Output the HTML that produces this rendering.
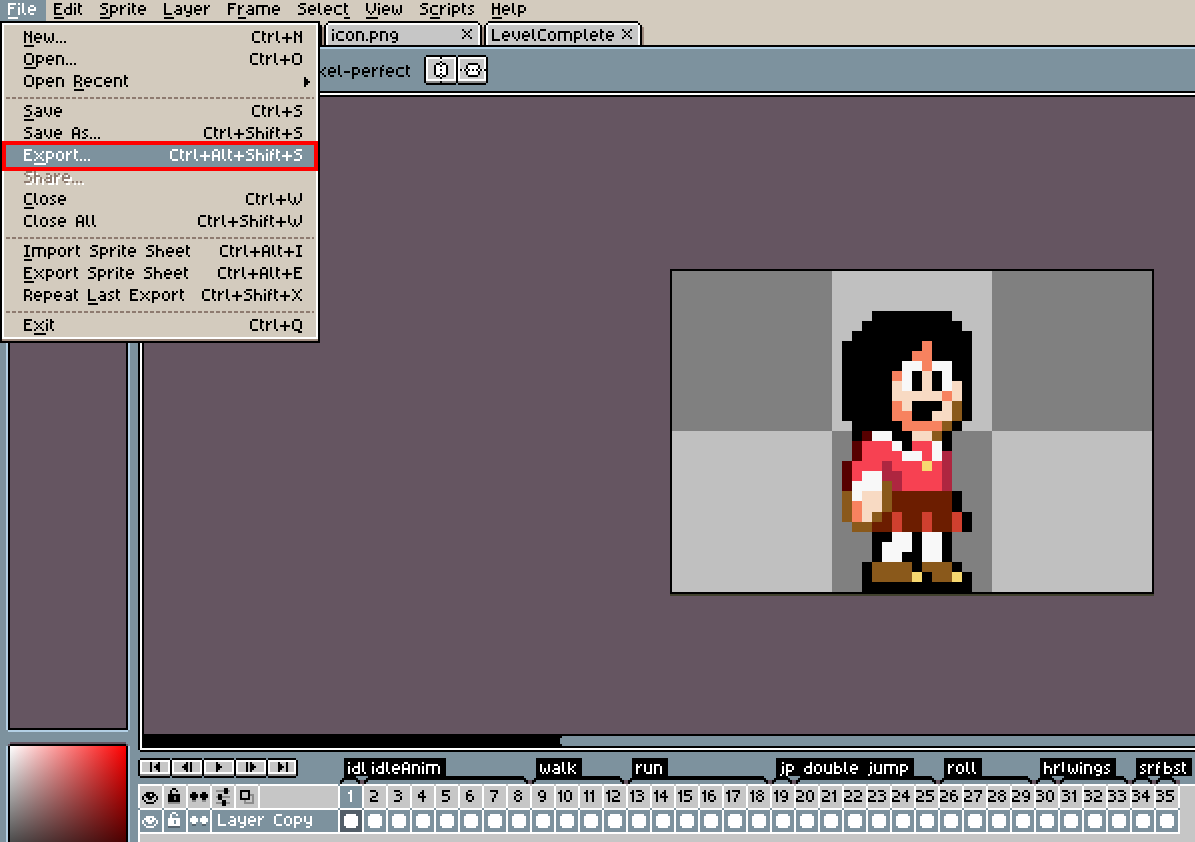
<!DOCTYPE html>
<html><head><meta charset="utf-8"><title>Aseprite - File menu</title>
<style>
html,body{margin:0;padding:0}
body{width:1195px;height:842px;overflow:hidden;position:relative;background:#7d929e;font-family:"Liberation Sans",sans-serif}
div,span,svg{position:absolute}
.t{white-space:pre;font-family:"Liberation Sans",sans-serif}
</style></head><body>
<div style="left:0px;top:0px;width:1195px;height:45px;background:#d3cbbe;"></div>
<div style="left:0px;top:45px;width:1195px;height:2px;background:#000;"></div>
<div style="left:0px;top:47px;width:1195px;height:2px;background:#b3d0e5;"></div>
<div style="left:0px;top:0px;width:46px;height:21px;background:#7d929e;"></div>
<svg style="position:absolute;left:8px;top:3px" width="30" height="16" viewBox="0 0 15 8" shape-rendering="crispEdges"><title>File</title><path fill="#fff" d="M0 0h4v1h-4zM0 1h1v1h-1zM0 2h3v1h-3zM0 3h1v1h-1zM0 4h1v1h-1zM0 5h1v1h-1zM5 0h1v1h-1zM5 2h1v1h-1zM5 3h1v1h-1zM5 4h1v1h-1zM5 5h1v1h-1zM7 0h1v1h-1zM7 1h1v1h-1zM7 2h1v1h-1zM7 3h1v1h-1zM7 4h1v1h-1zM8 5h1v1h-1zM11 1h2v1h-2zM10 2h1v1h-1zM13 2h1v1h-1zM10 3h4v1h-4zM10 4h1v1h-1zM11 5h2v1h-2zM0 7h5v1h-5z"/></svg>
<svg style="position:absolute;left:54px;top:3px" width="30" height="16" viewBox="0 0 15 8" shape-rendering="crispEdges"><title>Edit</title><path fill="#000" d="M0 0h4v1h-4zM0 1h1v1h-1zM0 2h3v1h-3zM0 3h1v1h-1zM0 4h1v1h-1zM0 5h4v1h-4zM8 0h1v1h-1zM8 1h1v1h-1zM6 2h3v1h-3zM5 3h1v1h-1zM8 3h1v1h-1zM5 4h1v1h-1zM8 4h1v1h-1zM6 5h3v1h-3zM10 0h1v1h-1zM10 2h1v1h-1zM10 3h1v1h-1zM10 4h1v1h-1zM10 5h1v1h-1zM12 0h1v1h-1zM12 1h2v1h-2zM12 2h1v1h-1zM12 3h1v1h-1zM12 4h1v1h-1zM13 5h1v1h-1zM0 7h5v1h-5z"/></svg>
<svg style="position:absolute;left:100px;top:3px" width="48" height="16" viewBox="0 0 24 8" shape-rendering="crispEdges"><title>Sprite</title><path fill="#000" d="M1 0h3v1h-3zM0 1h1v1h-1zM1 2h2v1h-2zM3 3h1v1h-1zM3 4h1v1h-1zM0 5h3v1h-3zM5 1h3v1h-3zM5 2h1v1h-1zM8 2h1v1h-1zM5 3h1v1h-1zM8 3h1v1h-1zM5 4h3v1h-3zM5 5h1v1h-1zM5 6h1v1h-1zM10 1h1v1h-1zM12 1h1v1h-1zM10 2h2v1h-2zM10 3h1v1h-1zM10 4h1v1h-1zM10 5h1v1h-1zM14 0h1v1h-1zM14 2h1v1h-1zM14 3h1v1h-1zM14 4h1v1h-1zM14 5h1v1h-1zM16 0h1v1h-1zM16 1h2v1h-2zM16 2h1v1h-1zM16 3h1v1h-1zM16 4h1v1h-1zM17 5h1v1h-1zM20 1h2v1h-2zM19 2h1v1h-1zM22 2h1v1h-1zM19 3h4v1h-4zM19 4h1v1h-1zM20 5h2v1h-2zM0 7h5v1h-5z"/></svg>
<svg style="position:absolute;left:164px;top:3px" width="48" height="16" viewBox="0 0 24 8" shape-rendering="crispEdges"><title>Layer</title><path fill="#000" d="M0 0h1v1h-1zM0 1h1v1h-1zM0 2h1v1h-1zM0 3h1v1h-1zM0 4h1v1h-1zM0 5h4v1h-4zM6 1h2v1h-2zM8 2h1v1h-1zM6 3h3v1h-3zM5 4h1v1h-1zM8 4h1v1h-1zM6 5h3v1h-3zM10 1h1v1h-1zM13 1h1v1h-1zM10 2h1v1h-1zM13 2h1v1h-1zM10 3h1v1h-1zM13 3h1v1h-1zM11 4h3v1h-3zM13 5h1v1h-1zM11 6h2v1h-2zM16 1h2v1h-2zM15 2h1v1h-1zM18 2h1v1h-1zM15 3h4v1h-4zM15 4h1v1h-1zM16 5h2v1h-2zM20 1h1v1h-1zM22 1h1v1h-1zM20 2h2v1h-2zM20 3h1v1h-1zM20 4h1v1h-1zM20 5h1v1h-1zM0 7h5v1h-5z"/></svg>
<svg style="position:absolute;left:228px;top:3px" width="54" height="16" viewBox="0 0 27 8" shape-rendering="crispEdges"><title>Frame</title><path fill="#000" d="M0 0h4v1h-4zM0 1h1v1h-1zM0 2h3v1h-3zM0 3h1v1h-1zM0 4h1v1h-1zM0 5h1v1h-1zM5 1h1v1h-1zM7 1h1v1h-1zM5 2h2v1h-2zM5 3h1v1h-1zM5 4h1v1h-1zM5 5h1v1h-1zM10 1h2v1h-2zM12 2h1v1h-1zM10 3h3v1h-3zM9 4h1v1h-1zM12 4h1v1h-1zM10 5h3v1h-3zM14 1h6v1h-6zM14 2h1v1h-1zM17 2h1v1h-1zM20 2h1v1h-1zM14 3h1v1h-1zM17 3h1v1h-1zM20 3h1v1h-1zM14 4h1v1h-1zM17 4h1v1h-1zM20 4h1v1h-1zM14 5h1v1h-1zM17 5h1v1h-1zM20 5h1v1h-1zM23 1h2v1h-2zM22 2h1v1h-1zM25 2h1v1h-1zM22 3h4v1h-4zM22 4h1v1h-1zM23 5h2v1h-2zM5 7h4v1h-4z"/></svg>
<svg style="position:absolute;left:298px;top:3px" width="52" height="16" viewBox="0 0 26 8" shape-rendering="crispEdges"><title>Select</title><path fill="#000" d="M1 0h3v1h-3zM0 1h1v1h-1zM1 2h2v1h-2zM3 3h1v1h-1zM3 4h1v1h-1zM0 5h3v1h-3zM6 1h2v1h-2zM5 2h1v1h-1zM8 2h1v1h-1zM5 3h4v1h-4zM5 4h1v1h-1zM6 5h2v1h-2zM10 0h1v1h-1zM10 1h1v1h-1zM10 2h1v1h-1zM10 3h1v1h-1zM10 4h1v1h-1zM11 5h1v1h-1zM14 1h2v1h-2zM13 2h1v1h-1zM16 2h1v1h-1zM13 3h4v1h-4zM13 4h1v1h-1zM14 5h2v1h-2zM19 1h3v1h-3zM18 2h1v1h-1zM18 3h1v1h-1zM18 4h1v1h-1zM19 5h3v1h-3zM23 0h1v1h-1zM23 1h2v1h-2zM23 2h1v1h-1zM23 3h1v1h-1zM23 4h1v1h-1zM24 5h1v1h-1zM23 7h3v1h-3z"/></svg>
<svg style="position:absolute;left:366px;top:3px" width="38" height="16" viewBox="0 0 19 8" shape-rendering="crispEdges"><title>View</title><path fill="#000" d="M0 0h1v1h-1zM4 0h1v1h-1zM0 1h1v1h-1zM4 1h1v1h-1zM0 2h1v1h-1zM4 2h1v1h-1zM0 3h1v1h-1zM4 3h1v1h-1zM1 4h1v1h-1zM3 4h1v1h-1zM2 5h1v1h-1zM6 0h1v1h-1zM6 2h1v1h-1zM6 3h1v1h-1zM6 4h1v1h-1zM6 5h1v1h-1zM9 1h2v1h-2zM8 2h1v1h-1zM11 2h1v1h-1zM8 3h4v1h-4zM8 4h1v1h-1zM9 5h2v1h-2zM13 1h1v1h-1zM17 1h1v1h-1zM13 2h1v1h-1zM17 2h1v1h-1zM13 3h1v1h-1zM15 3h1v1h-1zM17 3h1v1h-1zM13 4h1v1h-1zM15 4h1v1h-1zM17 4h1v1h-1zM14 5h1v1h-1zM16 5h1v1h-1zM0 7h6v1h-6z"/></svg>
<svg style="position:absolute;left:420px;top:3px" width="56" height="16" viewBox="0 0 28 8" shape-rendering="crispEdges"><title>Scripts</title><path fill="#000" d="M1 0h3v1h-3zM0 1h1v1h-1zM1 2h2v1h-2zM3 3h1v1h-1zM3 4h1v1h-1zM0 5h3v1h-3zM6 1h3v1h-3zM5 2h1v1h-1zM5 3h1v1h-1zM5 4h1v1h-1zM6 5h3v1h-3zM10 1h1v1h-1zM12 1h1v1h-1zM10 2h2v1h-2zM10 3h1v1h-1zM10 4h1v1h-1zM10 5h1v1h-1zM14 0h1v1h-1zM14 2h1v1h-1zM14 3h1v1h-1zM14 4h1v1h-1zM14 5h1v1h-1zM16 1h3v1h-3zM16 2h1v1h-1zM19 2h1v1h-1zM16 3h1v1h-1zM19 3h1v1h-1zM16 4h3v1h-3zM16 5h1v1h-1zM16 6h1v1h-1zM21 0h1v1h-1zM21 1h2v1h-2zM21 2h1v1h-1zM21 3h1v1h-1zM21 4h1v1h-1zM22 5h1v1h-1zM25 1h2v1h-2zM24 2h1v1h-1zM25 3h1v1h-1zM26 4h1v1h-1zM24 5h2v1h-2zM5 7h5v1h-5z"/></svg>
<svg style="position:absolute;left:492px;top:3px" width="36" height="16" viewBox="0 0 18 8" shape-rendering="crispEdges"><title>Help</title><path fill="#000" d="M0 0h1v1h-1zM3 0h1v1h-1zM0 1h1v1h-1zM3 1h1v1h-1zM0 2h4v1h-4zM0 3h1v1h-1zM3 3h1v1h-1zM0 4h1v1h-1zM3 4h1v1h-1zM0 5h1v1h-1zM3 5h1v1h-1zM6 1h2v1h-2zM5 2h1v1h-1zM8 2h1v1h-1zM5 3h4v1h-4zM5 4h1v1h-1zM6 5h2v1h-2zM10 0h1v1h-1zM10 1h1v1h-1zM10 2h1v1h-1zM10 3h1v1h-1zM10 4h1v1h-1zM11 5h1v1h-1zM13 1h3v1h-3zM13 2h1v1h-1zM16 2h1v1h-1zM13 3h1v1h-1zM16 3h1v1h-1zM13 4h3v1h-3zM13 5h1v1h-1zM13 6h1v1h-1zM0 7h5v1h-5z"/></svg>
<div style="left:168px;top:21px;width:150px;height:2px;background:#000;"></div>
<div style="left:164px;top:25px;width:2px;height:20px;background:#000;"></div>
<div style="left:166px;top:23px;width:2px;height:2px;background:#000;"></div>
<div style="left:318px;top:23px;width:2px;height:2px;background:#000;"></div>
<div style="left:320px;top:25px;width:2px;height:20px;background:#000;"></div>
<div style="left:166px;top:25px;width:154px;height:20px;background:#fff;"></div>
<div style="left:168px;top:25px;width:150px;height:20px;background:#c6c6c6;"></div>
<div style="left:168px;top:23px;width:150px;height:2px;background:#fff;"></div>
<div style="left:322px;top:27px;width:2px;height:18px;background:#9e8a7e;"></div>
<svg style="position:absolute;left:172px;top:29px" width="78" height="16" viewBox="0 0 39 8" shape-rendering="crispEdges"><title>sprite.ase</title><path fill="#000" d="M1 1h2v1h-2zM0 2h1v1h-1zM1 3h1v1h-1zM2 4h1v1h-1zM0 5h2v1h-2zM4 1h3v1h-3zM4 2h1v1h-1zM7 2h1v1h-1zM4 3h1v1h-1zM7 3h1v1h-1zM4 4h3v1h-3zM4 5h1v1h-1zM4 6h1v1h-1zM9 1h1v1h-1zM11 1h1v1h-1zM9 2h2v1h-2zM9 3h1v1h-1zM9 4h1v1h-1zM9 5h1v1h-1zM13 0h1v1h-1zM13 2h1v1h-1zM13 3h1v1h-1zM13 4h1v1h-1zM13 5h1v1h-1zM15 0h1v1h-1zM15 1h2v1h-2zM15 2h1v1h-1zM15 3h1v1h-1zM15 4h1v1h-1zM16 5h1v1h-1zM19 1h2v1h-2zM18 2h1v1h-1zM21 2h1v1h-1zM18 3h4v1h-4zM18 4h1v1h-1zM19 5h2v1h-2zM23 5h1v1h-1zM26 1h2v1h-2zM28 2h1v1h-1zM26 3h3v1h-3zM25 4h1v1h-1zM28 4h1v1h-1zM26 5h3v1h-3zM31 1h2v1h-2zM30 2h1v1h-1zM31 3h1v1h-1zM32 4h1v1h-1zM30 5h2v1h-2zM35 1h2v1h-2zM34 2h1v1h-1zM37 2h1v1h-1zM34 3h4v1h-4zM34 4h1v1h-1zM35 5h2v1h-2z"/></svg>
<svg style="position:absolute;left:302px;top:29px" width="10" height="10" preserveAspectRatio="none" viewBox="0 0 5 5" shape-rendering="crispEdges"><path fill="#000" d="M0 0h1v1h-1zM4 0h1v1h-1zM1 1h1v1h-1zM3 1h1v1h-1zM2 2h1v1h-1zM1 3h1v1h-1zM3 3h1v1h-1zM0 4h1v1h-1zM4 4h1v1h-1z"/></svg>
<div style="left:328px;top:21px;width:150px;height:2px;background:#000;"></div>
<div style="left:324px;top:25px;width:2px;height:20px;background:#000;"></div>
<div style="left:326px;top:23px;width:2px;height:2px;background:#000;"></div>
<div style="left:478px;top:23px;width:2px;height:2px;background:#000;"></div>
<div style="left:480px;top:25px;width:2px;height:20px;background:#000;"></div>
<div style="left:326px;top:25px;width:154px;height:20px;background:#fff;"></div>
<div style="left:328px;top:25px;width:150px;height:20px;background:#c6c6c6;"></div>
<div style="left:328px;top:23px;width:150px;height:2px;background:#fff;"></div>
<div style="left:482px;top:27px;width:2px;height:18px;background:#9e8a7e;"></div>
<svg style="position:absolute;left:332px;top:29px" width="68" height="16" viewBox="0 0 34 8" shape-rendering="crispEdges"><title>icon.png</title><path fill="#000" d="M0 0h1v1h-1zM0 2h1v1h-1zM0 3h1v1h-1zM0 4h1v1h-1zM0 5h1v1h-1zM3 1h3v1h-3zM2 2h1v1h-1zM2 3h1v1h-1zM2 4h1v1h-1zM3 5h3v1h-3zM8 1h2v1h-2zM7 2h1v1h-1zM10 2h1v1h-1zM7 3h1v1h-1zM10 3h1v1h-1zM7 4h1v1h-1zM10 4h1v1h-1zM8 5h2v1h-2zM12 1h3v1h-3zM12 2h1v1h-1zM15 2h1v1h-1zM12 3h1v1h-1zM15 3h1v1h-1zM12 4h1v1h-1zM15 4h1v1h-1zM12 5h1v1h-1zM15 5h1v1h-1zM17 5h1v1h-1zM19 1h3v1h-3zM19 2h1v1h-1zM22 2h1v1h-1zM19 3h1v1h-1zM22 3h1v1h-1zM19 4h3v1h-3zM19 5h1v1h-1zM19 6h1v1h-1zM24 1h3v1h-3zM24 2h1v1h-1zM27 2h1v1h-1zM24 3h1v1h-1zM27 3h1v1h-1zM24 4h1v1h-1zM27 4h1v1h-1zM24 5h1v1h-1zM27 5h1v1h-1zM30 1h2v1h-2zM29 2h1v1h-1zM32 2h1v1h-1zM29 3h1v1h-1zM32 3h1v1h-1zM30 4h3v1h-3zM32 5h1v1h-1zM30 6h2v1h-2z"/></svg>
<svg style="position:absolute;left:462px;top:29px" width="10" height="10" preserveAspectRatio="none" viewBox="0 0 5 5" shape-rendering="crispEdges"><path fill="#000" d="M0 0h1v1h-1zM4 0h1v1h-1zM1 1h1v1h-1zM3 1h1v1h-1zM2 2h1v1h-1zM1 3h1v1h-1zM3 3h1v1h-1zM0 4h1v1h-1zM4 4h1v1h-1z"/></svg>
<div style="left:488px;top:21px;width:150px;height:2px;background:#000;"></div>
<div style="left:484px;top:25px;width:2px;height:20px;background:#000;"></div>
<div style="left:486px;top:23px;width:2px;height:2px;background:#000;"></div>
<div style="left:638px;top:23px;width:2px;height:2px;background:#000;"></div>
<div style="left:640px;top:25px;width:2px;height:20px;background:#000;"></div>
<div style="left:486px;top:25px;width:154px;height:20px;background:#fff;"></div>
<div style="left:488px;top:25px;width:150px;height:20px;background:#c6c6c6;"></div>
<div style="left:488px;top:23px;width:150px;height:2px;background:#fff;"></div>
<div style="left:642px;top:27px;width:2px;height:18px;background:#9e8a7e;"></div>
<svg style="position:absolute;left:492px;top:29px" width="124" height="16" viewBox="0 0 62 8" shape-rendering="crispEdges"><title>LevelComplete</title><path fill="#000" d="M0 0h1v1h-1zM0 1h1v1h-1zM0 2h1v1h-1zM0 3h1v1h-1zM0 4h1v1h-1zM0 5h4v1h-4zM6 1h2v1h-2zM5 2h1v1h-1zM8 2h1v1h-1zM5 3h4v1h-4zM5 4h1v1h-1zM6 5h2v1h-2zM10 1h1v1h-1zM13 1h1v1h-1zM10 2h1v1h-1zM13 2h1v1h-1zM10 3h1v1h-1zM13 3h1v1h-1zM11 4h1v1h-1zM13 4h1v1h-1zM12 5h1v1h-1zM16 1h2v1h-2zM15 2h1v1h-1zM18 2h1v1h-1zM15 3h4v1h-4zM15 4h1v1h-1zM16 5h2v1h-2zM20 0h1v1h-1zM20 1h1v1h-1zM20 2h1v1h-1zM20 3h1v1h-1zM20 4h1v1h-1zM21 5h1v1h-1zM24 0h3v1h-3zM23 1h1v1h-1zM23 2h1v1h-1zM23 3h1v1h-1zM23 4h1v1h-1zM24 5h3v1h-3zM29 1h2v1h-2zM28 2h1v1h-1zM31 2h1v1h-1zM28 3h1v1h-1zM31 3h1v1h-1zM28 4h1v1h-1zM31 4h1v1h-1zM29 5h2v1h-2zM33 1h6v1h-6zM33 2h1v1h-1zM36 2h1v1h-1zM39 2h1v1h-1zM33 3h1v1h-1zM36 3h1v1h-1zM39 3h1v1h-1zM33 4h1v1h-1zM36 4h1v1h-1zM39 4h1v1h-1zM33 5h1v1h-1zM36 5h1v1h-1zM39 5h1v1h-1zM41 1h3v1h-3zM41 2h1v1h-1zM44 2h1v1h-1zM41 3h1v1h-1zM44 3h1v1h-1zM41 4h3v1h-3zM41 5h1v1h-1zM41 6h1v1h-1zM46 0h1v1h-1zM46 1h1v1h-1zM46 2h1v1h-1zM46 3h1v1h-1zM46 4h1v1h-1zM47 5h1v1h-1zM50 1h2v1h-2zM49 2h1v1h-1zM52 2h1v1h-1zM49 3h4v1h-4zM49 4h1v1h-1zM50 5h2v1h-2zM54 0h1v1h-1zM54 1h2v1h-2zM54 2h1v1h-1zM54 3h1v1h-1zM54 4h1v1h-1zM55 5h1v1h-1zM58 1h2v1h-2zM57 2h1v1h-1zM60 2h1v1h-1zM57 3h4v1h-4zM57 4h1v1h-1zM58 5h2v1h-2z"/></svg>
<svg style="position:absolute;left:622px;top:29px" width="10" height="10" preserveAspectRatio="none" viewBox="0 0 5 5" shape-rendering="crispEdges"><path fill="#000" d="M0 0h1v1h-1zM4 0h1v1h-1zM1 1h1v1h-1zM3 1h1v1h-1zM2 2h1v1h-1zM1 3h1v1h-1zM3 3h1v1h-1zM0 4h1v1h-1zM4 4h1v1h-1z"/></svg>
<svg style="position:absolute;left:316px;top:65px" width="96" height="16" viewBox="0 0 48 8" shape-rendering="crispEdges"><title>xel-perfect</title><path fill="#000" d="M0 1h1v1h-1zM4 1h1v1h-1zM1 2h1v1h-1zM3 2h1v1h-1zM2 3h1v1h-1zM1 4h1v1h-1zM3 4h1v1h-1zM0 5h1v1h-1zM4 5h1v1h-1zM7 1h2v1h-2zM6 2h1v1h-1zM9 2h1v1h-1zM6 3h4v1h-4zM6 4h1v1h-1zM7 5h2v1h-2zM11 0h1v1h-1zM11 1h1v1h-1zM11 2h1v1h-1zM11 3h1v1h-1zM11 4h1v1h-1zM12 5h1v1h-1zM14 3h3v1h-3zM18 1h3v1h-3zM18 2h1v1h-1zM21 2h1v1h-1zM18 3h1v1h-1zM21 3h1v1h-1zM18 4h3v1h-3zM18 5h1v1h-1zM18 6h1v1h-1zM24 1h2v1h-2zM23 2h1v1h-1zM26 2h1v1h-1zM23 3h4v1h-4zM23 4h1v1h-1zM24 5h2v1h-2zM28 1h1v1h-1zM30 1h1v1h-1zM28 2h2v1h-2zM28 3h1v1h-1zM28 4h1v1h-1zM28 5h1v1h-1zM33 0h1v1h-1zM32 1h1v1h-1zM32 2h2v1h-2zM32 3h1v1h-1zM32 4h1v1h-1zM32 5h1v1h-1zM36 1h2v1h-2zM35 2h1v1h-1zM38 2h1v1h-1zM35 3h4v1h-4zM35 4h1v1h-1zM36 5h2v1h-2zM41 1h3v1h-3zM40 2h1v1h-1zM40 3h1v1h-1zM40 4h1v1h-1zM41 5h3v1h-3zM45 0h1v1h-1zM45 1h2v1h-2zM45 2h1v1h-1zM45 3h1v1h-1zM45 4h1v1h-1zM46 5h1v1h-1z"/></svg>
<div style="left:424px;top:57px;width:2px;height:26px;background:#000;"></div>
<div style="left:426px;top:55px;width:30px;height:2px;background:#000;"></div>
<div style="left:426px;top:83px;width:30px;height:2px;background:#000;"></div>
<div style="left:426px;top:57px;width:30px;height:26px;background:#fff;"></div>
<div style="left:428px;top:59px;width:26px;height:20px;background:#c6c6c6;"></div>
<div style="left:426px;top:79px;width:30px;height:2px;background:#fff;"></div>
<div style="left:426px;top:81px;width:30px;height:2px;background:#8c8c8c;"></div>
<div style="left:456px;top:57px;width:2px;height:26px;background:#000;"></div>
<div style="left:458px;top:55px;width:28px;height:2px;background:#000;"></div>
<div style="left:458px;top:83px;width:28px;height:2px;background:#000;"></div>
<div style="left:458px;top:57px;width:28px;height:26px;background:#fff;"></div>
<div style="left:460px;top:59px;width:24px;height:20px;background:#c6c6c6;"></div>
<div style="left:458px;top:79px;width:28px;height:2px;background:#fff;"></div>
<div style="left:458px;top:81px;width:28px;height:2px;background:#8c8c8c;"></div>
<div style="left:486px;top:57px;width:2px;height:26px;background:#000;"></div>
<svg style="position:absolute;left:434px;top:57px" width="14" height="26" preserveAspectRatio="none" viewBox="0 0 7 13" shape-rendering="crispEdges"><path fill="#000" d="M3 0h1v1h-1zM3 2h1v1h-1zM1 3h2v1h-2zM4 3h2v1h-2zM0 4h1v1h-1zM3 4h1v1h-1zM6 4h1v1h-1zM0 5h1v1h-1zM6 5h1v1h-1zM0 6h1v1h-1zM3 6h1v1h-1zM6 6h1v1h-1zM0 7h1v1h-1zM6 7h1v1h-1zM0 8h1v1h-1zM3 8h1v1h-1zM6 8h1v1h-1zM1 9h2v1h-2zM4 9h2v1h-2zM3 10h1v1h-1zM3 12h1v1h-1z"/><path fill="#fff" d="M3 1h1v1h-1zM3 3h1v1h-1zM1 4h2v1h-2zM4 4h2v1h-2zM1 5h5v1h-5zM1 6h2v1h-2zM4 6h2v1h-2zM1 7h5v1h-5zM1 8h2v1h-2zM4 8h2v1h-2zM3 9h1v1h-1zM3 11h1v1h-1z"/></svg>
<svg style="position:absolute;left:460px;top:63px" width="26" height="14" preserveAspectRatio="none" viewBox="0 0 13 7" shape-rendering="crispEdges"><path fill="#000" d="M4 0h5v1h-5zM3 1h1v1h-1zM9 1h1v1h-1zM3 2h1v1h-1zM9 2h1v1h-1zM0 3h1v1h-1zM2 3h1v1h-1zM4 3h1v1h-1zM6 3h1v1h-1zM8 3h1v1h-1zM10 3h1v1h-1zM12 3h1v1h-1zM3 4h1v1h-1zM9 4h1v1h-1zM3 5h1v1h-1zM9 5h1v1h-1zM4 6h5v1h-5z"/><path fill="#fff" d="M4 1h5v1h-5zM4 2h5v1h-5zM1 3h1v1h-1zM3 3h1v1h-1zM5 3h1v1h-1zM7 3h1v1h-1zM9 3h1v1h-1zM11 3h1v1h-1zM4 4h5v1h-5zM4 5h5v1h-5z"/></svg>
<div style="left:6px;top:86px;width:2px;height:644px;background:#b3d0e5;"></div>
<div style="left:128px;top:86px;width:2px;height:644px;background:#b3d0e5;"></div>
<div style="left:8px;top:730px;width:120px;height:2px;background:#b3d0e5;"></div>
<div style="left:8px;top:86px;width:120px;height:644px;background:#000;"></div>
<div style="left:10px;top:86px;width:116px;height:642px;background:#655561;"></div>
<div style="left:10px;top:742px;width:116px;height:2px;background:#655561;"></div>
<div style="left:10px;top:744px;width:116px;height:2px;background:#000;"></div>
<div style="left:8px;top:744px;width:2px;height:2px;background:#655561;"></div>
<div style="left:126px;top:744px;width:2px;height:2px;background:#655561;"></div>
<div style="left:6px;top:746px;width:2px;height:100px;background:#b3d0e5;"></div>
<div style="left:128px;top:746px;width:2px;height:100px;background:#b3d0e5;"></div>
<div style="left:8px;top:746px;width:120px;height:100px;background:#000;"></div>
<div style="left:10px;top:746px;width:116px;height:137px;background:linear-gradient(to bottom, rgba(0,0,0,0), #000),linear-gradient(to right, #fff, #f00)"></div>
<div style="left:138px;top:91px;width:1057px;height:661px;background:#000;"></div>
<div style="left:140px;top:93px;width:1055px;height:657px;background:#fff;"></div>
<div style="left:142px;top:95px;width:1053px;height:653px;background:#000;"></div>
<div style="left:144px;top:97px;width:1051px;height:637px;background:#655561;"></div>
<div style="left:138px;top:750px;width:2px;height:2px;background:#7d929e;"></div>
<div style="left:562px;top:736px;width:633px;height:10px;background:#7d929e;"></div>
<div style="left:560px;top:738px;width:2px;height:6px;background:#7d929e;"></div>
<div style="left:670px;top:269px;width:484px;height:325px;background:#000;"></div>
<div style="left:670px;top:594px;width:484px;height:2px;background:#41412e;"></div>
<div style="left:672px;top:271px;width:480px;height:321px;background:linear-gradient(90deg, #808080 0 160px, #c0c0c0 160px 320px, #808080 320px 480px)"></div>
<div style="left:672px;top:431px;width:480px;height:161px;background:linear-gradient(90deg, #c0c0c0 0 160px, #808080 160px 320px, #c0c0c0 320px 480px)"></div>
<div style="left:832px;top:271px;width:160px;height:160px;background:#c0c0c0"></div>
<svg style="position:absolute;left:832px;top:311px" width="160" height="200" preserveAspectRatio="none" viewBox="0 0 16 20" shape-rendering="crispEdges"><path fill="#000000" d="M4 0h8v1h-8zM3 1h10v1h-10zM2 2h12v1h-12zM1 3h8v1h-8zM10 3h4v1h-4zM1 4h7v1h-7zM10 4h4v1h-4zM1 5h6v1h-6zM12 5h2v1h-2zM1 6h5v1h-5zM8 6h1v1h-1zM10 6h1v1h-1zM12 6h2v1h-2zM1 7h5v1h-5zM8 7h1v1h-1zM10 7h1v1h-1zM13 7h1v1h-1zM1 8h5v1h-5zM13 8h1v1h-1zM1 9h5v1h-5zM8 9h3v1h-3zM13 9h1v1h-1zM1 10h5v1h-5zM8 10h2v1h-2zM13 10h1v1h-1zM2 11h5v1h-5zM12 11h1v1h-1zM2 12h1v1h-1zM6 12h2v1h-2zM11 12h1v1h-1zM7 13h1v1h-1zM11 13h1v1h-1zM12 18h1v1h-1zM12 19h1v1h-1z"/><path fill="#f7825f" d="M9 3h1v1h-1zM8 4h2v1h-2zM9 5h1v1h-1zM6 6h1v1h-1zM11 8h1v1h-1zM6 9h1v1h-1zM6 10h2v1h-2zM7 11h4v1h-4zM2 19h1v1h-1z"/><path fill="#f8f8f8" d="M7 5h2v1h-2zM10 5h2v1h-2zM7 6h1v1h-1zM11 6h1v1h-1zM7 7h1v1h-1zM11 7h1v1h-1zM4 12h2v1h-2zM6 13h1v1h-1zM10 13h1v1h-1zM7 14h2v1h-2zM10 14h1v1h-1zM3 16h2v1h-2zM2 17h3v1h-3zM2 18h1v1h-1z"/><path fill="#f8dac3" d="M9 6h1v1h-1zM6 7h1v1h-1zM9 7h1v1h-1zM12 7h1v1h-1zM6 8h5v1h-5zM12 8h1v1h-1zM7 9h1v1h-1zM11 9h1v1h-1zM10 10h2v1h-2zM8 12h2v1h-2zM3 18h2v1h-2zM3 19h2v1h-2z"/><path fill="#8a591b" d="M12 9h1v1h-1zM12 10h1v1h-1zM11 11h1v1h-1zM10 12h1v1h-1zM5 17h1v1h-1zM1 18h1v1h-1zM5 18h1v1h-1zM1 19h1v1h-1zM5 19h1v1h-1z"/><path fill="#570000" d="M3 12h1v1h-1zM2 13h1v1h-1zM2 14h1v1h-1zM1 15h1v1h-1zM1 16h1v1h-1zM1 17h1v1h-1z"/><path fill="#f74152" d="M3 13h3v1h-3zM8 13h2v1h-2zM3 14h4v1h-4zM9 14h1v1h-1zM2 15h3v1h-3zM6 15h3v1h-3zM10 15h1v1h-1zM2 16h1v1h-1zM7 16h4v1h-4zM7 17h4v1h-4z"/><path fill="#ae2640" d="M11 14h1v1h-1zM5 15h1v1h-1zM11 15h1v1h-1zM5 16h2v1h-2zM11 16h1v1h-1zM6 17h1v1h-1zM11 17h1v1h-1z"/><path fill="#f7d870" d="M9 15h1v1h-1z"/><path fill="#6c1d00" d="M6 18h6v1h-6zM6 19h6v1h-6z"/></svg>
<svg style="position:absolute;left:832px;top:502px" width="160" height="10" preserveAspectRatio="none" viewBox="0 0 16 1" shape-rendering="crispEdges"><path fill="#8a591b" d="M1 0h1v1h-1zM5 0h1v1h-1z"/><path fill="#f7825f" d="M2 0h1v1h-1z"/><path fill="#f8dac3" d="M3 0h2v1h-2z"/><path fill="#6c1d00" d="M6 0h6v1h-6z"/><path fill="#000000" d="M12 0h1v1h-1z"/></svg>
<svg style="position:absolute;left:832px;top:512px" width="160" height="80" preserveAspectRatio="none" viewBox="0 0 16 8" shape-rendering="crispEdges"><path fill="#8a591b" d="M1 0h1v1h-1zM4 0h1v1h-1zM2 1h2v1h-2zM4 5h4v1h-4zM9 5h3v1h-3zM4 6h4v1h-4zM10 6h2v1h-2z"/><path fill="#f7825f" d="M2 0h1v1h-1z"/><path fill="#f8dac3" d="M3 0h1v1h-1z"/><path fill="#6c1d00" d="M5 0h1v1h-1zM7 0h2v1h-2zM10 0h2v1h-2zM4 1h2v1h-2zM7 1h2v1h-2zM10 1h2v1h-2z"/><path fill="#d0402f" d="M6 0h1v1h-1zM9 0h1v1h-1zM12 0h1v1h-1zM6 1h1v1h-1zM9 1h1v1h-1zM12 1h1v1h-1z"/><path fill="#000000" d="M13 0h1v1h-1zM13 1h1v1h-1zM4 2h2v1h-2zM8 2h1v1h-1zM11 2h1v1h-1zM4 3h1v1h-1zM8 3h1v1h-1zM11 3h1v1h-1zM4 4h1v1h-1zM7 4h2v1h-2zM11 4h1v1h-1zM3 5h1v1h-1zM8 5h1v1h-1zM12 5h1v1h-1zM3 6h1v1h-1zM9 6h1v1h-1zM13 6h1v1h-1zM3 7h11v1h-11z"/><path fill="#f8f8f8" d="M6 2h2v1h-2zM9 2h2v1h-2zM5 3h3v1h-3zM9 3h2v1h-2zM5 4h2v1h-2zM9 4h2v1h-2z"/><path fill="#f7d870" d="M8 6h1v1h-1zM12 6h1v1h-1z"/></svg>
<div style="left:138px;top:760px;width:2px;height:16px;background:#000;"></div>
<div style="left:140px;top:758px;width:30px;height:2px;background:#000;"></div>
<div style="left:140px;top:776px;width:30px;height:2px;background:#000;"></div>
<div style="left:140px;top:760px;width:30px;height:16px;background:#fff;"></div>
<div style="left:142px;top:762px;width:26px;height:10px;background:#c6c6c6;"></div>
<div style="left:140px;top:774px;width:30px;height:2px;background:#8c8c8c;"></div>
<div style="left:170px;top:760px;width:2px;height:16px;background:#000;"></div>
<div style="left:172px;top:758px;width:30px;height:2px;background:#000;"></div>
<div style="left:172px;top:776px;width:30px;height:2px;background:#000;"></div>
<div style="left:172px;top:760px;width:30px;height:16px;background:#fff;"></div>
<div style="left:174px;top:762px;width:26px;height:10px;background:#c6c6c6;"></div>
<div style="left:172px;top:774px;width:30px;height:2px;background:#8c8c8c;"></div>
<div style="left:202px;top:760px;width:2px;height:16px;background:#000;"></div>
<div style="left:204px;top:758px;width:30px;height:2px;background:#000;"></div>
<div style="left:204px;top:776px;width:30px;height:2px;background:#000;"></div>
<div style="left:204px;top:760px;width:30px;height:16px;background:#fff;"></div>
<div style="left:206px;top:762px;width:26px;height:10px;background:#c6c6c6;"></div>
<div style="left:204px;top:774px;width:30px;height:2px;background:#8c8c8c;"></div>
<div style="left:234px;top:760px;width:2px;height:16px;background:#000;"></div>
<div style="left:236px;top:758px;width:30px;height:2px;background:#000;"></div>
<div style="left:236px;top:776px;width:30px;height:2px;background:#000;"></div>
<div style="left:236px;top:760px;width:30px;height:16px;background:#fff;"></div>
<div style="left:238px;top:762px;width:26px;height:10px;background:#c6c6c6;"></div>
<div style="left:236px;top:774px;width:30px;height:2px;background:#8c8c8c;"></div>
<div style="left:266px;top:760px;width:2px;height:16px;background:#000;"></div>
<div style="left:268px;top:758px;width:28px;height:2px;background:#000;"></div>
<div style="left:268px;top:776px;width:28px;height:2px;background:#000;"></div>
<div style="left:268px;top:760px;width:28px;height:16px;background:#fff;"></div>
<div style="left:270px;top:762px;width:24px;height:10px;background:#c6c6c6;"></div>
<div style="left:268px;top:774px;width:28px;height:2px;background:#8c8c8c;"></div>
<div style="left:296px;top:760px;width:2px;height:16px;background:#000;"></div>
<svg style="position:absolute;left:150px;top:762px" width="10" height="10" preserveAspectRatio="none" viewBox="0 0 5 5" shape-rendering="crispEdges"><path fill="#000" d="M0 0h1v1h-1zM4 0h1v1h-1zM0 1h1v1h-1zM3 1h2v1h-2zM0 2h1v1h-1zM2 2h3v1h-3zM0 3h1v1h-1zM3 3h2v1h-2zM0 4h1v1h-1zM4 4h1v1h-1z"/></svg>
<svg style="position:absolute;left:182px;top:762px" width="10" height="10" preserveAspectRatio="none" viewBox="0 0 5 5" shape-rendering="crispEdges"><path fill="#000" d="M2 0h1v1h-1zM4 0h1v1h-1zM1 1h2v1h-2zM4 1h1v1h-1zM0 2h3v1h-3zM4 2h1v1h-1zM1 3h2v1h-2zM4 3h1v1h-1zM2 4h1v1h-1zM4 4h1v1h-1z"/></svg>
<svg style="position:absolute;left:216px;top:762px" width="6" height="10" preserveAspectRatio="none" viewBox="0 0 3 5" shape-rendering="crispEdges"><path fill="#000" d="M0 0h1v1h-1zM0 1h2v1h-2zM0 2h3v1h-3zM0 3h2v1h-2zM0 4h1v1h-1z"/></svg>
<svg style="position:absolute;left:246px;top:762px" width="10" height="10" preserveAspectRatio="none" viewBox="0 0 5 5" shape-rendering="crispEdges"><path fill="#000" d="M0 0h1v1h-1zM2 0h1v1h-1zM0 1h1v1h-1zM2 1h2v1h-2zM0 2h1v1h-1zM2 2h3v1h-3zM0 3h1v1h-1zM2 3h2v1h-2zM0 4h1v1h-1zM2 4h1v1h-1z"/></svg>
<svg style="position:absolute;left:278px;top:762px" width="10" height="10" preserveAspectRatio="none" viewBox="0 0 5 5" shape-rendering="crispEdges"><path fill="#000" d="M0 0h1v1h-1zM4 0h1v1h-1zM0 1h2v1h-2zM4 1h1v1h-1zM0 2h3v1h-3zM4 2h1v1h-1zM0 3h2v1h-2zM4 3h1v1h-1zM0 4h1v1h-1zM4 4h1v1h-1z"/></svg>
<div style="left:138px;top:784px;width:1057px;height:58px;background:#c6c6c6;"></div>
<div style="left:138px;top:784px;width:1057px;height:2px;background:#fff;"></div>
<div style="left:138px;top:784px;width:2px;height:58px;background:#fff;"></div>
<div style="left:138px;top:808px;width:1042px;height:2px;background:#fff;"></div>
<div style="left:138px;top:832px;width:1042px;height:2px;background:#fff;"></div>
<div style="left:162px;top:786px;width:2px;height:22px;background:#fff;"></div>
<div style="left:186px;top:786px;width:2px;height:22px;background:#fff;"></div>
<div style="left:210px;top:786px;width:2px;height:22px;background:#fff;"></div>
<div style="left:234px;top:786px;width:2px;height:22px;background:#fff;"></div>
<div style="left:258px;top:786px;width:2px;height:22px;background:#fff;"></div>
<div style="left:140px;top:810px;width:198px;height:22px;background:#7d929e;"></div>
<div style="left:162px;top:810px;width:2px;height:22px;background:#fff;"></div>
<div style="left:186px;top:810px;width:2px;height:22px;background:#fff;"></div>
<div style="left:210px;top:810px;width:2px;height:22px;background:#fff;"></div>
<div style="left:338px;top:786px;width:2px;height:46px;background:#fff;"></div>
<div style="left:340px;top:786px;width:22px;height:22px;background:#7d929e;"></div>
<div style="left:362px;top:786px;width:2px;height:46px;background:#fff;"></div>
<div style="left:340px;top:810px;width:22px;height:22px;background:#525e68;"></div>
<svg style="position:absolute;left:344px;top:814px" width="14" height="14" preserveAspectRatio="none" viewBox="0 0 7 7" shape-rendering="crispEdges"><path fill="#fff" d="M1 0h5v1h-5zM0 1h7v1h-7zM0 2h7v1h-7zM0 3h7v1h-7zM0 4h7v1h-7zM0 5h7v1h-7zM1 6h5v1h-5z"/></svg>
<svg style="position:absolute;left:348px;top:790px" width="6" height="16" viewBox="0 0 3 8" shape-rendering="crispEdges"><title>1</title><path fill="#fff" d="M1 0h1v1h-1zM0 1h2v1h-2zM1 2h1v1h-1zM1 3h1v1h-1zM1 4h1v1h-1zM1 5h1v1h-1z"/></svg>
<div style="left:364px;top:786px;width:22px;height:22px;background:#c6c6c6;"></div>
<div style="left:386px;top:786px;width:2px;height:46px;background:#fff;"></div>
<div style="left:364px;top:810px;width:22px;height:22px;background:#7d929e;"></div>
<svg style="position:absolute;left:368px;top:814px" width="14" height="14" preserveAspectRatio="none" viewBox="0 0 7 7" shape-rendering="crispEdges"><path fill="#fff" d="M1 0h5v1h-5zM0 1h7v1h-7zM0 2h7v1h-7zM0 3h7v1h-7zM0 4h7v1h-7zM0 5h7v1h-7zM1 6h5v1h-5z"/></svg>
<svg style="position:absolute;left:370px;top:790px" width="10" height="16" viewBox="0 0 5 8" shape-rendering="crispEdges"><title>2</title><path fill="#000" d="M0 0h3v1h-3zM3 1h1v1h-1zM3 2h1v1h-1zM1 3h2v1h-2zM0 4h1v1h-1zM0 5h4v1h-4z"/></svg>
<div style="left:388px;top:786px;width:22px;height:22px;background:#c6c6c6;"></div>
<div style="left:410px;top:786px;width:2px;height:46px;background:#fff;"></div>
<div style="left:388px;top:810px;width:22px;height:22px;background:#7d929e;"></div>
<svg style="position:absolute;left:392px;top:814px" width="14" height="14" preserveAspectRatio="none" viewBox="0 0 7 7" shape-rendering="crispEdges"><path fill="#fff" d="M1 0h5v1h-5zM0 1h7v1h-7zM0 2h7v1h-7zM0 3h7v1h-7zM0 4h7v1h-7zM0 5h7v1h-7zM1 6h5v1h-5z"/></svg>
<svg style="position:absolute;left:394px;top:790px" width="10" height="16" viewBox="0 0 5 8" shape-rendering="crispEdges"><title>3</title><path fill="#000" d="M0 0h3v1h-3zM3 1h1v1h-1zM1 2h2v1h-2zM3 3h1v1h-1zM3 4h1v1h-1zM0 5h3v1h-3z"/></svg>
<div style="left:412px;top:786px;width:22px;height:22px;background:#c6c6c6;"></div>
<div style="left:434px;top:786px;width:2px;height:46px;background:#fff;"></div>
<div style="left:412px;top:810px;width:22px;height:22px;background:#7d929e;"></div>
<svg style="position:absolute;left:416px;top:814px" width="14" height="14" preserveAspectRatio="none" viewBox="0 0 7 7" shape-rendering="crispEdges"><path fill="#fff" d="M1 0h5v1h-5zM0 1h7v1h-7zM0 2h7v1h-7zM0 3h7v1h-7zM0 4h7v1h-7zM0 5h7v1h-7zM1 6h5v1h-5z"/></svg>
<svg style="position:absolute;left:418px;top:790px" width="10" height="16" viewBox="0 0 5 8" shape-rendering="crispEdges"><title>4</title><path fill="#000" d="M2 0h1v1h-1zM1 1h2v1h-2zM0 2h1v1h-1zM2 2h1v1h-1zM0 3h4v1h-4zM2 4h1v1h-1zM2 5h1v1h-1z"/></svg>
<div style="left:436px;top:786px;width:22px;height:22px;background:#c6c6c6;"></div>
<div style="left:458px;top:786px;width:2px;height:46px;background:#fff;"></div>
<div style="left:436px;top:810px;width:22px;height:22px;background:#7d929e;"></div>
<svg style="position:absolute;left:440px;top:814px" width="14" height="14" preserveAspectRatio="none" viewBox="0 0 7 7" shape-rendering="crispEdges"><path fill="#fff" d="M1 0h5v1h-5zM0 1h7v1h-7zM0 2h7v1h-7zM0 3h7v1h-7zM0 4h7v1h-7zM0 5h7v1h-7zM1 6h5v1h-5z"/></svg>
<svg style="position:absolute;left:442px;top:790px" width="10" height="16" viewBox="0 0 5 8" shape-rendering="crispEdges"><title>5</title><path fill="#000" d="M0 0h4v1h-4zM0 1h1v1h-1zM0 2h3v1h-3zM3 3h1v1h-1zM3 4h1v1h-1zM0 5h3v1h-3z"/></svg>
<div style="left:460px;top:786px;width:22px;height:22px;background:#c6c6c6;"></div>
<div style="left:482px;top:786px;width:2px;height:46px;background:#fff;"></div>
<div style="left:460px;top:810px;width:22px;height:22px;background:#7d929e;"></div>
<svg style="position:absolute;left:464px;top:814px" width="14" height="14" preserveAspectRatio="none" viewBox="0 0 7 7" shape-rendering="crispEdges"><path fill="#fff" d="M1 0h5v1h-5zM0 1h7v1h-7zM0 2h7v1h-7zM0 3h7v1h-7zM0 4h7v1h-7zM0 5h7v1h-7zM1 6h5v1h-5z"/></svg>
<svg style="position:absolute;left:466px;top:790px" width="10" height="16" viewBox="0 0 5 8" shape-rendering="crispEdges"><title>6</title><path fill="#000" d="M1 0h2v1h-2zM0 1h1v1h-1zM0 2h3v1h-3zM0 3h1v1h-1zM3 3h1v1h-1zM0 4h1v1h-1zM3 4h1v1h-1zM1 5h2v1h-2z"/></svg>
<div style="left:484px;top:786px;width:22px;height:22px;background:#c6c6c6;"></div>
<div style="left:506px;top:786px;width:2px;height:46px;background:#fff;"></div>
<div style="left:484px;top:810px;width:22px;height:22px;background:#7d929e;"></div>
<svg style="position:absolute;left:488px;top:814px" width="14" height="14" preserveAspectRatio="none" viewBox="0 0 7 7" shape-rendering="crispEdges"><path fill="#fff" d="M1 0h5v1h-5zM0 1h7v1h-7zM0 2h7v1h-7zM0 3h7v1h-7zM0 4h7v1h-7zM0 5h7v1h-7zM1 6h5v1h-5z"/></svg>
<svg style="position:absolute;left:490px;top:790px" width="10" height="16" viewBox="0 0 5 8" shape-rendering="crispEdges"><title>7</title><path fill="#000" d="M0 0h4v1h-4zM3 1h1v1h-1zM2 2h1v1h-1zM2 3h1v1h-1zM1 4h1v1h-1zM1 5h1v1h-1z"/></svg>
<div style="left:508px;top:786px;width:22px;height:22px;background:#c6c6c6;"></div>
<div style="left:530px;top:786px;width:2px;height:46px;background:#fff;"></div>
<div style="left:508px;top:810px;width:22px;height:22px;background:#7d929e;"></div>
<svg style="position:absolute;left:512px;top:814px" width="14" height="14" preserveAspectRatio="none" viewBox="0 0 7 7" shape-rendering="crispEdges"><path fill="#fff" d="M1 0h5v1h-5zM0 1h7v1h-7zM0 2h7v1h-7zM0 3h7v1h-7zM0 4h7v1h-7zM0 5h7v1h-7zM1 6h5v1h-5z"/></svg>
<svg style="position:absolute;left:514px;top:790px" width="10" height="16" viewBox="0 0 5 8" shape-rendering="crispEdges"><title>8</title><path fill="#000" d="M1 0h2v1h-2zM0 1h1v1h-1zM3 1h1v1h-1zM1 2h2v1h-2zM0 3h1v1h-1zM3 3h1v1h-1zM0 4h1v1h-1zM3 4h1v1h-1zM1 5h2v1h-2z"/></svg>
<div style="left:532px;top:786px;width:22px;height:22px;background:#c6c6c6;"></div>
<div style="left:554px;top:786px;width:2px;height:46px;background:#fff;"></div>
<div style="left:532px;top:810px;width:22px;height:22px;background:#7d929e;"></div>
<svg style="position:absolute;left:536px;top:814px" width="14" height="14" preserveAspectRatio="none" viewBox="0 0 7 7" shape-rendering="crispEdges"><path fill="#fff" d="M1 0h5v1h-5zM0 1h7v1h-7zM0 2h7v1h-7zM0 3h7v1h-7zM0 4h7v1h-7zM0 5h7v1h-7zM1 6h5v1h-5z"/></svg>
<svg style="position:absolute;left:538px;top:790px" width="10" height="16" viewBox="0 0 5 8" shape-rendering="crispEdges"><title>9</title><path fill="#000" d="M1 0h2v1h-2zM0 1h1v1h-1zM3 1h1v1h-1zM0 2h1v1h-1zM3 2h1v1h-1zM1 3h3v1h-3zM3 4h1v1h-1zM1 5h2v1h-2z"/></svg>
<div style="left:556px;top:786px;width:22px;height:22px;background:#c6c6c6;"></div>
<div style="left:578px;top:786px;width:2px;height:46px;background:#fff;"></div>
<div style="left:556px;top:810px;width:22px;height:22px;background:#7d929e;"></div>
<svg style="position:absolute;left:560px;top:814px" width="14" height="14" preserveAspectRatio="none" viewBox="0 0 7 7" shape-rendering="crispEdges"><path fill="#fff" d="M1 0h5v1h-5zM0 1h7v1h-7zM0 2h7v1h-7zM0 3h7v1h-7zM0 4h7v1h-7zM0 5h7v1h-7zM1 6h5v1h-5z"/></svg>
<svg style="position:absolute;left:558px;top:790px" width="16" height="16" viewBox="0 0 8 8" shape-rendering="crispEdges"><title>10</title><path fill="#000" d="M1 0h1v1h-1zM0 1h2v1h-2zM1 2h1v1h-1zM1 3h1v1h-1zM1 4h1v1h-1zM1 5h1v1h-1zM4 0h2v1h-2zM3 1h1v1h-1zM6 1h1v1h-1zM3 2h1v1h-1zM6 2h1v1h-1zM3 3h1v1h-1zM6 3h1v1h-1zM3 4h1v1h-1zM6 4h1v1h-1zM4 5h2v1h-2z"/></svg>
<div style="left:580px;top:786px;width:22px;height:22px;background:#c6c6c6;"></div>
<div style="left:602px;top:786px;width:2px;height:46px;background:#fff;"></div>
<div style="left:580px;top:810px;width:22px;height:22px;background:#7d929e;"></div>
<svg style="position:absolute;left:584px;top:814px" width="14" height="14" preserveAspectRatio="none" viewBox="0 0 7 7" shape-rendering="crispEdges"><path fill="#fff" d="M1 0h5v1h-5zM0 1h7v1h-7zM0 2h7v1h-7zM0 3h7v1h-7zM0 4h7v1h-7zM0 5h7v1h-7zM1 6h5v1h-5z"/></svg>
<svg style="position:absolute;left:584px;top:790px" width="12" height="16" viewBox="0 0 6 8" shape-rendering="crispEdges"><title>11</title><path fill="#000" d="M1 0h1v1h-1zM0 1h2v1h-2zM1 2h1v1h-1zM1 3h1v1h-1zM1 4h1v1h-1zM1 5h1v1h-1zM4 0h1v1h-1zM3 1h2v1h-2zM4 2h1v1h-1zM4 3h1v1h-1zM4 4h1v1h-1zM4 5h1v1h-1z"/></svg>
<div style="left:604px;top:786px;width:22px;height:22px;background:#c6c6c6;"></div>
<div style="left:626px;top:786px;width:2px;height:46px;background:#fff;"></div>
<div style="left:604px;top:810px;width:22px;height:22px;background:#7d929e;"></div>
<svg style="position:absolute;left:608px;top:814px" width="14" height="14" preserveAspectRatio="none" viewBox="0 0 7 7" shape-rendering="crispEdges"><path fill="#fff" d="M1 0h5v1h-5zM0 1h7v1h-7zM0 2h7v1h-7zM0 3h7v1h-7zM0 4h7v1h-7zM0 5h7v1h-7zM1 6h5v1h-5z"/></svg>
<svg style="position:absolute;left:606px;top:790px" width="16" height="16" viewBox="0 0 8 8" shape-rendering="crispEdges"><title>12</title><path fill="#000" d="M1 0h1v1h-1zM0 1h2v1h-2zM1 2h1v1h-1zM1 3h1v1h-1zM1 4h1v1h-1zM1 5h1v1h-1zM3 0h3v1h-3zM6 1h1v1h-1zM6 2h1v1h-1zM4 3h2v1h-2zM3 4h1v1h-1zM3 5h4v1h-4z"/></svg>
<div style="left:628px;top:786px;width:22px;height:22px;background:#c6c6c6;"></div>
<div style="left:650px;top:786px;width:2px;height:46px;background:#fff;"></div>
<div style="left:628px;top:810px;width:22px;height:22px;background:#7d929e;"></div>
<svg style="position:absolute;left:632px;top:814px" width="14" height="14" preserveAspectRatio="none" viewBox="0 0 7 7" shape-rendering="crispEdges"><path fill="#fff" d="M1 0h5v1h-5zM0 1h7v1h-7zM0 2h7v1h-7zM0 3h7v1h-7zM0 4h7v1h-7zM0 5h7v1h-7zM1 6h5v1h-5z"/></svg>
<svg style="position:absolute;left:630px;top:790px" width="16" height="16" viewBox="0 0 8 8" shape-rendering="crispEdges"><title>13</title><path fill="#000" d="M1 0h1v1h-1zM0 1h2v1h-2zM1 2h1v1h-1zM1 3h1v1h-1zM1 4h1v1h-1zM1 5h1v1h-1zM3 0h3v1h-3zM6 1h1v1h-1zM4 2h2v1h-2zM6 3h1v1h-1zM6 4h1v1h-1zM3 5h3v1h-3z"/></svg>
<div style="left:652px;top:786px;width:22px;height:22px;background:#c6c6c6;"></div>
<div style="left:674px;top:786px;width:2px;height:46px;background:#fff;"></div>
<div style="left:652px;top:810px;width:22px;height:22px;background:#7d929e;"></div>
<svg style="position:absolute;left:656px;top:814px" width="14" height="14" preserveAspectRatio="none" viewBox="0 0 7 7" shape-rendering="crispEdges"><path fill="#fff" d="M1 0h5v1h-5zM0 1h7v1h-7zM0 2h7v1h-7zM0 3h7v1h-7zM0 4h7v1h-7zM0 5h7v1h-7zM1 6h5v1h-5z"/></svg>
<svg style="position:absolute;left:654px;top:790px" width="16" height="16" viewBox="0 0 8 8" shape-rendering="crispEdges"><title>14</title><path fill="#000" d="M1 0h1v1h-1zM0 1h2v1h-2zM1 2h1v1h-1zM1 3h1v1h-1zM1 4h1v1h-1zM1 5h1v1h-1zM5 0h1v1h-1zM4 1h2v1h-2zM3 2h1v1h-1zM5 2h1v1h-1zM3 3h4v1h-4zM5 4h1v1h-1zM5 5h1v1h-1z"/></svg>
<div style="left:676px;top:786px;width:22px;height:22px;background:#c6c6c6;"></div>
<div style="left:698px;top:786px;width:2px;height:46px;background:#fff;"></div>
<div style="left:676px;top:810px;width:22px;height:22px;background:#7d929e;"></div>
<svg style="position:absolute;left:680px;top:814px" width="14" height="14" preserveAspectRatio="none" viewBox="0 0 7 7" shape-rendering="crispEdges"><path fill="#fff" d="M1 0h5v1h-5zM0 1h7v1h-7zM0 2h7v1h-7zM0 3h7v1h-7zM0 4h7v1h-7zM0 5h7v1h-7zM1 6h5v1h-5z"/></svg>
<svg style="position:absolute;left:678px;top:790px" width="16" height="16" viewBox="0 0 8 8" shape-rendering="crispEdges"><title>15</title><path fill="#000" d="M1 0h1v1h-1zM0 1h2v1h-2zM1 2h1v1h-1zM1 3h1v1h-1zM1 4h1v1h-1zM1 5h1v1h-1zM3 0h4v1h-4zM3 1h1v1h-1zM3 2h3v1h-3zM6 3h1v1h-1zM6 4h1v1h-1zM3 5h3v1h-3z"/></svg>
<div style="left:700px;top:786px;width:22px;height:22px;background:#c6c6c6;"></div>
<div style="left:722px;top:786px;width:2px;height:46px;background:#fff;"></div>
<div style="left:700px;top:810px;width:22px;height:22px;background:#7d929e;"></div>
<svg style="position:absolute;left:704px;top:814px" width="14" height="14" preserveAspectRatio="none" viewBox="0 0 7 7" shape-rendering="crispEdges"><path fill="#fff" d="M1 0h5v1h-5zM0 1h7v1h-7zM0 2h7v1h-7zM0 3h7v1h-7zM0 4h7v1h-7zM0 5h7v1h-7zM1 6h5v1h-5z"/></svg>
<svg style="position:absolute;left:702px;top:790px" width="16" height="16" viewBox="0 0 8 8" shape-rendering="crispEdges"><title>16</title><path fill="#000" d="M1 0h1v1h-1zM0 1h2v1h-2zM1 2h1v1h-1zM1 3h1v1h-1zM1 4h1v1h-1zM1 5h1v1h-1zM4 0h2v1h-2zM3 1h1v1h-1zM3 2h3v1h-3zM3 3h1v1h-1zM6 3h1v1h-1zM3 4h1v1h-1zM6 4h1v1h-1zM4 5h2v1h-2z"/></svg>
<div style="left:724px;top:786px;width:22px;height:22px;background:#c6c6c6;"></div>
<div style="left:746px;top:786px;width:2px;height:46px;background:#fff;"></div>
<div style="left:724px;top:810px;width:22px;height:22px;background:#7d929e;"></div>
<svg style="position:absolute;left:728px;top:814px" width="14" height="14" preserveAspectRatio="none" viewBox="0 0 7 7" shape-rendering="crispEdges"><path fill="#fff" d="M1 0h5v1h-5zM0 1h7v1h-7zM0 2h7v1h-7zM0 3h7v1h-7zM0 4h7v1h-7zM0 5h7v1h-7zM1 6h5v1h-5z"/></svg>
<svg style="position:absolute;left:726px;top:790px" width="16" height="16" viewBox="0 0 8 8" shape-rendering="crispEdges"><title>17</title><path fill="#000" d="M1 0h1v1h-1zM0 1h2v1h-2zM1 2h1v1h-1zM1 3h1v1h-1zM1 4h1v1h-1zM1 5h1v1h-1zM3 0h4v1h-4zM6 1h1v1h-1zM5 2h1v1h-1zM5 3h1v1h-1zM4 4h1v1h-1zM4 5h1v1h-1z"/></svg>
<div style="left:748px;top:786px;width:22px;height:22px;background:#c6c6c6;"></div>
<div style="left:770px;top:786px;width:2px;height:46px;background:#fff;"></div>
<div style="left:748px;top:810px;width:22px;height:22px;background:#7d929e;"></div>
<svg style="position:absolute;left:752px;top:814px" width="14" height="14" preserveAspectRatio="none" viewBox="0 0 7 7" shape-rendering="crispEdges"><path fill="#fff" d="M1 0h5v1h-5zM0 1h7v1h-7zM0 2h7v1h-7zM0 3h7v1h-7zM0 4h7v1h-7zM0 5h7v1h-7zM1 6h5v1h-5z"/></svg>
<svg style="position:absolute;left:750px;top:790px" width="16" height="16" viewBox="0 0 8 8" shape-rendering="crispEdges"><title>18</title><path fill="#000" d="M1 0h1v1h-1zM0 1h2v1h-2zM1 2h1v1h-1zM1 3h1v1h-1zM1 4h1v1h-1zM1 5h1v1h-1zM4 0h2v1h-2zM3 1h1v1h-1zM6 1h1v1h-1zM4 2h2v1h-2zM3 3h1v1h-1zM6 3h1v1h-1zM3 4h1v1h-1zM6 4h1v1h-1zM4 5h2v1h-2z"/></svg>
<div style="left:772px;top:786px;width:22px;height:22px;background:#c6c6c6;"></div>
<div style="left:794px;top:786px;width:2px;height:46px;background:#fff;"></div>
<div style="left:772px;top:810px;width:22px;height:22px;background:#7d929e;"></div>
<svg style="position:absolute;left:776px;top:814px" width="14" height="14" preserveAspectRatio="none" viewBox="0 0 7 7" shape-rendering="crispEdges"><path fill="#fff" d="M1 0h5v1h-5zM0 1h7v1h-7zM0 2h7v1h-7zM0 3h7v1h-7zM0 4h7v1h-7zM0 5h7v1h-7zM1 6h5v1h-5z"/></svg>
<svg style="position:absolute;left:774px;top:790px" width="16" height="16" viewBox="0 0 8 8" shape-rendering="crispEdges"><title>19</title><path fill="#000" d="M1 0h1v1h-1zM0 1h2v1h-2zM1 2h1v1h-1zM1 3h1v1h-1zM1 4h1v1h-1zM1 5h1v1h-1zM4 0h2v1h-2zM3 1h1v1h-1zM6 1h1v1h-1zM3 2h1v1h-1zM6 2h1v1h-1zM4 3h3v1h-3zM6 4h1v1h-1zM4 5h2v1h-2z"/></svg>
<div style="left:796px;top:786px;width:22px;height:22px;background:#c6c6c6;"></div>
<div style="left:818px;top:786px;width:2px;height:46px;background:#fff;"></div>
<div style="left:796px;top:810px;width:22px;height:22px;background:#7d929e;"></div>
<svg style="position:absolute;left:800px;top:814px" width="14" height="14" preserveAspectRatio="none" viewBox="0 0 7 7" shape-rendering="crispEdges"><path fill="#fff" d="M1 0h5v1h-5zM0 1h7v1h-7zM0 2h7v1h-7zM0 3h7v1h-7zM0 4h7v1h-7zM0 5h7v1h-7zM1 6h5v1h-5z"/></svg>
<svg style="position:absolute;left:796px;top:790px" width="20" height="16" viewBox="0 0 10 8" shape-rendering="crispEdges"><title>20</title><path fill="#000" d="M0 0h3v1h-3zM3 1h1v1h-1zM3 2h1v1h-1zM1 3h2v1h-2zM0 4h1v1h-1zM0 5h4v1h-4zM6 0h2v1h-2zM5 1h1v1h-1zM8 1h1v1h-1zM5 2h1v1h-1zM8 2h1v1h-1zM5 3h1v1h-1zM8 3h1v1h-1zM5 4h1v1h-1zM8 4h1v1h-1zM6 5h2v1h-2z"/></svg>
<div style="left:820px;top:786px;width:22px;height:22px;background:#c6c6c6;"></div>
<div style="left:842px;top:786px;width:2px;height:46px;background:#fff;"></div>
<div style="left:820px;top:810px;width:22px;height:22px;background:#7d929e;"></div>
<svg style="position:absolute;left:824px;top:814px" width="14" height="14" preserveAspectRatio="none" viewBox="0 0 7 7" shape-rendering="crispEdges"><path fill="#fff" d="M1 0h5v1h-5zM0 1h7v1h-7zM0 2h7v1h-7zM0 3h7v1h-7zM0 4h7v1h-7zM0 5h7v1h-7zM1 6h5v1h-5z"/></svg>
<svg style="position:absolute;left:822px;top:790px" width="16" height="16" viewBox="0 0 8 8" shape-rendering="crispEdges"><title>21</title><path fill="#000" d="M0 0h3v1h-3zM3 1h1v1h-1zM3 2h1v1h-1zM1 3h2v1h-2zM0 4h1v1h-1zM0 5h4v1h-4zM6 0h1v1h-1zM5 1h2v1h-2zM6 2h1v1h-1zM6 3h1v1h-1zM6 4h1v1h-1zM6 5h1v1h-1z"/></svg>
<div style="left:844px;top:786px;width:22px;height:22px;background:#c6c6c6;"></div>
<div style="left:866px;top:786px;width:2px;height:46px;background:#fff;"></div>
<div style="left:844px;top:810px;width:22px;height:22px;background:#7d929e;"></div>
<svg style="position:absolute;left:848px;top:814px" width="14" height="14" preserveAspectRatio="none" viewBox="0 0 7 7" shape-rendering="crispEdges"><path fill="#fff" d="M1 0h5v1h-5zM0 1h7v1h-7zM0 2h7v1h-7zM0 3h7v1h-7zM0 4h7v1h-7zM0 5h7v1h-7zM1 6h5v1h-5z"/></svg>
<svg style="position:absolute;left:844px;top:790px" width="20" height="16" viewBox="0 0 10 8" shape-rendering="crispEdges"><title>22</title><path fill="#000" d="M0 0h3v1h-3zM3 1h1v1h-1zM3 2h1v1h-1zM1 3h2v1h-2zM0 4h1v1h-1zM0 5h4v1h-4zM5 0h3v1h-3zM8 1h1v1h-1zM8 2h1v1h-1zM6 3h2v1h-2zM5 4h1v1h-1zM5 5h4v1h-4z"/></svg>
<div style="left:868px;top:786px;width:22px;height:22px;background:#c6c6c6;"></div>
<div style="left:890px;top:786px;width:2px;height:46px;background:#fff;"></div>
<div style="left:868px;top:810px;width:22px;height:22px;background:#7d929e;"></div>
<svg style="position:absolute;left:872px;top:814px" width="14" height="14" preserveAspectRatio="none" viewBox="0 0 7 7" shape-rendering="crispEdges"><path fill="#fff" d="M1 0h5v1h-5zM0 1h7v1h-7zM0 2h7v1h-7zM0 3h7v1h-7zM0 4h7v1h-7zM0 5h7v1h-7zM1 6h5v1h-5z"/></svg>
<svg style="position:absolute;left:868px;top:790px" width="20" height="16" viewBox="0 0 10 8" shape-rendering="crispEdges"><title>23</title><path fill="#000" d="M0 0h3v1h-3zM3 1h1v1h-1zM3 2h1v1h-1zM1 3h2v1h-2zM0 4h1v1h-1zM0 5h4v1h-4zM5 0h3v1h-3zM8 1h1v1h-1zM6 2h2v1h-2zM8 3h1v1h-1zM8 4h1v1h-1zM5 5h3v1h-3z"/></svg>
<div style="left:892px;top:786px;width:22px;height:22px;background:#c6c6c6;"></div>
<div style="left:914px;top:786px;width:2px;height:46px;background:#fff;"></div>
<div style="left:892px;top:810px;width:22px;height:22px;background:#7d929e;"></div>
<svg style="position:absolute;left:896px;top:814px" width="14" height="14" preserveAspectRatio="none" viewBox="0 0 7 7" shape-rendering="crispEdges"><path fill="#fff" d="M1 0h5v1h-5zM0 1h7v1h-7zM0 2h7v1h-7zM0 3h7v1h-7zM0 4h7v1h-7zM0 5h7v1h-7zM1 6h5v1h-5z"/></svg>
<svg style="position:absolute;left:892px;top:790px" width="20" height="16" viewBox="0 0 10 8" shape-rendering="crispEdges"><title>24</title><path fill="#000" d="M0 0h3v1h-3zM3 1h1v1h-1zM3 2h1v1h-1zM1 3h2v1h-2zM0 4h1v1h-1zM0 5h4v1h-4zM7 0h1v1h-1zM6 1h2v1h-2zM5 2h1v1h-1zM7 2h1v1h-1zM5 3h4v1h-4zM7 4h1v1h-1zM7 5h1v1h-1z"/></svg>
<div style="left:916px;top:786px;width:22px;height:22px;background:#c6c6c6;"></div>
<div style="left:938px;top:786px;width:2px;height:46px;background:#fff;"></div>
<div style="left:916px;top:810px;width:22px;height:22px;background:#7d929e;"></div>
<svg style="position:absolute;left:920px;top:814px" width="14" height="14" preserveAspectRatio="none" viewBox="0 0 7 7" shape-rendering="crispEdges"><path fill="#fff" d="M1 0h5v1h-5zM0 1h7v1h-7zM0 2h7v1h-7zM0 3h7v1h-7zM0 4h7v1h-7zM0 5h7v1h-7zM1 6h5v1h-5z"/></svg>
<svg style="position:absolute;left:916px;top:790px" width="20" height="16" viewBox="0 0 10 8" shape-rendering="crispEdges"><title>25</title><path fill="#000" d="M0 0h3v1h-3zM3 1h1v1h-1zM3 2h1v1h-1zM1 3h2v1h-2zM0 4h1v1h-1zM0 5h4v1h-4zM5 0h4v1h-4zM5 1h1v1h-1zM5 2h3v1h-3zM8 3h1v1h-1zM8 4h1v1h-1zM5 5h3v1h-3z"/></svg>
<div style="left:940px;top:786px;width:22px;height:22px;background:#c6c6c6;"></div>
<div style="left:962px;top:786px;width:2px;height:46px;background:#fff;"></div>
<div style="left:940px;top:810px;width:22px;height:22px;background:#7d929e;"></div>
<svg style="position:absolute;left:944px;top:814px" width="14" height="14" preserveAspectRatio="none" viewBox="0 0 7 7" shape-rendering="crispEdges"><path fill="#fff" d="M1 0h5v1h-5zM0 1h7v1h-7zM0 2h7v1h-7zM0 3h7v1h-7zM0 4h7v1h-7zM0 5h7v1h-7zM1 6h5v1h-5z"/></svg>
<svg style="position:absolute;left:940px;top:790px" width="20" height="16" viewBox="0 0 10 8" shape-rendering="crispEdges"><title>26</title><path fill="#000" d="M0 0h3v1h-3zM3 1h1v1h-1zM3 2h1v1h-1zM1 3h2v1h-2zM0 4h1v1h-1zM0 5h4v1h-4zM6 0h2v1h-2zM5 1h1v1h-1zM5 2h3v1h-3zM5 3h1v1h-1zM8 3h1v1h-1zM5 4h1v1h-1zM8 4h1v1h-1zM6 5h2v1h-2z"/></svg>
<div style="left:964px;top:786px;width:22px;height:22px;background:#c6c6c6;"></div>
<div style="left:986px;top:786px;width:2px;height:46px;background:#fff;"></div>
<div style="left:964px;top:810px;width:22px;height:22px;background:#7d929e;"></div>
<svg style="position:absolute;left:968px;top:814px" width="14" height="14" preserveAspectRatio="none" viewBox="0 0 7 7" shape-rendering="crispEdges"><path fill="#fff" d="M1 0h5v1h-5zM0 1h7v1h-7zM0 2h7v1h-7zM0 3h7v1h-7zM0 4h7v1h-7zM0 5h7v1h-7zM1 6h5v1h-5z"/></svg>
<svg style="position:absolute;left:964px;top:790px" width="20" height="16" viewBox="0 0 10 8" shape-rendering="crispEdges"><title>27</title><path fill="#000" d="M0 0h3v1h-3zM3 1h1v1h-1zM3 2h1v1h-1zM1 3h2v1h-2zM0 4h1v1h-1zM0 5h4v1h-4zM5 0h4v1h-4zM8 1h1v1h-1zM7 2h1v1h-1zM7 3h1v1h-1zM6 4h1v1h-1zM6 5h1v1h-1z"/></svg>
<div style="left:988px;top:786px;width:22px;height:22px;background:#c6c6c6;"></div>
<div style="left:1010px;top:786px;width:2px;height:46px;background:#fff;"></div>
<div style="left:988px;top:810px;width:22px;height:22px;background:#7d929e;"></div>
<svg style="position:absolute;left:992px;top:814px" width="14" height="14" preserveAspectRatio="none" viewBox="0 0 7 7" shape-rendering="crispEdges"><path fill="#fff" d="M1 0h5v1h-5zM0 1h7v1h-7zM0 2h7v1h-7zM0 3h7v1h-7zM0 4h7v1h-7zM0 5h7v1h-7zM1 6h5v1h-5z"/></svg>
<svg style="position:absolute;left:988px;top:790px" width="20" height="16" viewBox="0 0 10 8" shape-rendering="crispEdges"><title>28</title><path fill="#000" d="M0 0h3v1h-3zM3 1h1v1h-1zM3 2h1v1h-1zM1 3h2v1h-2zM0 4h1v1h-1zM0 5h4v1h-4zM6 0h2v1h-2zM5 1h1v1h-1zM8 1h1v1h-1zM6 2h2v1h-2zM5 3h1v1h-1zM8 3h1v1h-1zM5 4h1v1h-1zM8 4h1v1h-1zM6 5h2v1h-2z"/></svg>
<div style="left:1012px;top:786px;width:22px;height:22px;background:#c6c6c6;"></div>
<div style="left:1034px;top:786px;width:2px;height:46px;background:#fff;"></div>
<div style="left:1012px;top:810px;width:22px;height:22px;background:#7d929e;"></div>
<svg style="position:absolute;left:1016px;top:814px" width="14" height="14" preserveAspectRatio="none" viewBox="0 0 7 7" shape-rendering="crispEdges"><path fill="#fff" d="M1 0h5v1h-5zM0 1h7v1h-7zM0 2h7v1h-7zM0 3h7v1h-7zM0 4h7v1h-7zM0 5h7v1h-7zM1 6h5v1h-5z"/></svg>
<svg style="position:absolute;left:1012px;top:790px" width="20" height="16" viewBox="0 0 10 8" shape-rendering="crispEdges"><title>29</title><path fill="#000" d="M0 0h3v1h-3zM3 1h1v1h-1zM3 2h1v1h-1zM1 3h2v1h-2zM0 4h1v1h-1zM0 5h4v1h-4zM6 0h2v1h-2zM5 1h1v1h-1zM8 1h1v1h-1zM5 2h1v1h-1zM8 2h1v1h-1zM6 3h3v1h-3zM8 4h1v1h-1zM6 5h2v1h-2z"/></svg>
<div style="left:1036px;top:786px;width:22px;height:22px;background:#c6c6c6;"></div>
<div style="left:1058px;top:786px;width:2px;height:46px;background:#fff;"></div>
<div style="left:1036px;top:810px;width:22px;height:22px;background:#7d929e;"></div>
<svg style="position:absolute;left:1040px;top:814px" width="14" height="14" preserveAspectRatio="none" viewBox="0 0 7 7" shape-rendering="crispEdges"><path fill="#fff" d="M1 0h5v1h-5zM0 1h7v1h-7zM0 2h7v1h-7zM0 3h7v1h-7zM0 4h7v1h-7zM0 5h7v1h-7zM1 6h5v1h-5z"/></svg>
<svg style="position:absolute;left:1036px;top:790px" width="20" height="16" viewBox="0 0 10 8" shape-rendering="crispEdges"><title>30</title><path fill="#000" d="M0 0h3v1h-3zM3 1h1v1h-1zM1 2h2v1h-2zM3 3h1v1h-1zM3 4h1v1h-1zM0 5h3v1h-3zM6 0h2v1h-2zM5 1h1v1h-1zM8 1h1v1h-1zM5 2h1v1h-1zM8 2h1v1h-1zM5 3h1v1h-1zM8 3h1v1h-1zM5 4h1v1h-1zM8 4h1v1h-1zM6 5h2v1h-2z"/></svg>
<div style="left:1060px;top:786px;width:22px;height:22px;background:#c6c6c6;"></div>
<div style="left:1082px;top:786px;width:2px;height:46px;background:#fff;"></div>
<div style="left:1060px;top:810px;width:22px;height:22px;background:#7d929e;"></div>
<svg style="position:absolute;left:1064px;top:814px" width="14" height="14" preserveAspectRatio="none" viewBox="0 0 7 7" shape-rendering="crispEdges"><path fill="#fff" d="M1 0h5v1h-5zM0 1h7v1h-7zM0 2h7v1h-7zM0 3h7v1h-7zM0 4h7v1h-7zM0 5h7v1h-7zM1 6h5v1h-5z"/></svg>
<svg style="position:absolute;left:1062px;top:790px" width="16" height="16" viewBox="0 0 8 8" shape-rendering="crispEdges"><title>31</title><path fill="#000" d="M0 0h3v1h-3zM3 1h1v1h-1zM1 2h2v1h-2zM3 3h1v1h-1zM3 4h1v1h-1zM0 5h3v1h-3zM6 0h1v1h-1zM5 1h2v1h-2zM6 2h1v1h-1zM6 3h1v1h-1zM6 4h1v1h-1zM6 5h1v1h-1z"/></svg>
<div style="left:1084px;top:786px;width:22px;height:22px;background:#c6c6c6;"></div>
<div style="left:1106px;top:786px;width:2px;height:46px;background:#fff;"></div>
<div style="left:1084px;top:810px;width:22px;height:22px;background:#7d929e;"></div>
<svg style="position:absolute;left:1088px;top:814px" width="14" height="14" preserveAspectRatio="none" viewBox="0 0 7 7" shape-rendering="crispEdges"><path fill="#fff" d="M1 0h5v1h-5zM0 1h7v1h-7zM0 2h7v1h-7zM0 3h7v1h-7zM0 4h7v1h-7zM0 5h7v1h-7zM1 6h5v1h-5z"/></svg>
<svg style="position:absolute;left:1084px;top:790px" width="20" height="16" viewBox="0 0 10 8" shape-rendering="crispEdges"><title>32</title><path fill="#000" d="M0 0h3v1h-3zM3 1h1v1h-1zM1 2h2v1h-2zM3 3h1v1h-1zM3 4h1v1h-1zM0 5h3v1h-3zM5 0h3v1h-3zM8 1h1v1h-1zM8 2h1v1h-1zM6 3h2v1h-2zM5 4h1v1h-1zM5 5h4v1h-4z"/></svg>
<div style="left:1108px;top:786px;width:22px;height:22px;background:#c6c6c6;"></div>
<div style="left:1130px;top:786px;width:2px;height:46px;background:#fff;"></div>
<div style="left:1108px;top:810px;width:22px;height:22px;background:#7d929e;"></div>
<svg style="position:absolute;left:1112px;top:814px" width="14" height="14" preserveAspectRatio="none" viewBox="0 0 7 7" shape-rendering="crispEdges"><path fill="#fff" d="M1 0h5v1h-5zM0 1h7v1h-7zM0 2h7v1h-7zM0 3h7v1h-7zM0 4h7v1h-7zM0 5h7v1h-7zM1 6h5v1h-5z"/></svg>
<svg style="position:absolute;left:1108px;top:790px" width="20" height="16" viewBox="0 0 10 8" shape-rendering="crispEdges"><title>33</title><path fill="#000" d="M0 0h3v1h-3zM3 1h1v1h-1zM1 2h2v1h-2zM3 3h1v1h-1zM3 4h1v1h-1zM0 5h3v1h-3zM5 0h3v1h-3zM8 1h1v1h-1zM6 2h2v1h-2zM8 3h1v1h-1zM8 4h1v1h-1zM5 5h3v1h-3z"/></svg>
<div style="left:1132px;top:786px;width:22px;height:22px;background:#c6c6c6;"></div>
<div style="left:1154px;top:786px;width:2px;height:46px;background:#fff;"></div>
<div style="left:1132px;top:810px;width:22px;height:22px;background:#7d929e;"></div>
<svg style="position:absolute;left:1136px;top:814px" width="14" height="14" preserveAspectRatio="none" viewBox="0 0 7 7" shape-rendering="crispEdges"><path fill="#fff" d="M1 0h5v1h-5zM0 1h7v1h-7zM0 2h7v1h-7zM0 3h7v1h-7zM0 4h7v1h-7zM0 5h7v1h-7zM1 6h5v1h-5z"/></svg>
<svg style="position:absolute;left:1132px;top:790px" width="20" height="16" viewBox="0 0 10 8" shape-rendering="crispEdges"><title>34</title><path fill="#000" d="M0 0h3v1h-3zM3 1h1v1h-1zM1 2h2v1h-2zM3 3h1v1h-1zM3 4h1v1h-1zM0 5h3v1h-3zM7 0h1v1h-1zM6 1h2v1h-2zM5 2h1v1h-1zM7 2h1v1h-1zM5 3h4v1h-4zM7 4h1v1h-1zM7 5h1v1h-1z"/></svg>
<div style="left:1156px;top:786px;width:22px;height:22px;background:#c6c6c6;"></div>
<div style="left:1178px;top:786px;width:2px;height:46px;background:#fff;"></div>
<div style="left:1156px;top:810px;width:22px;height:22px;background:#7d929e;"></div>
<svg style="position:absolute;left:1160px;top:814px" width="14" height="14" preserveAspectRatio="none" viewBox="0 0 7 7" shape-rendering="crispEdges"><path fill="#fff" d="M1 0h5v1h-5zM0 1h7v1h-7zM0 2h7v1h-7zM0 3h7v1h-7zM0 4h7v1h-7zM0 5h7v1h-7zM1 6h5v1h-5z"/></svg>
<svg style="position:absolute;left:1156px;top:790px" width="20" height="16" viewBox="0 0 10 8" shape-rendering="crispEdges"><title>35</title><path fill="#000" d="M0 0h3v1h-3zM3 1h1v1h-1zM1 2h2v1h-2zM3 3h1v1h-1zM3 4h1v1h-1zM0 5h3v1h-3zM5 0h4v1h-4zM5 1h1v1h-1zM5 2h3v1h-3zM8 3h1v1h-1zM8 4h1v1h-1zM5 5h3v1h-3z"/></svg>
<div style="left:162px;top:808px;width:2px;height:2px;background:#7d929e;"></div>
<div style="left:162px;top:784px;width:2px;height:2px;background:#c6c6c6;"></div>
<div style="left:186px;top:808px;width:2px;height:2px;background:#7d929e;"></div>
<div style="left:186px;top:784px;width:2px;height:2px;background:#c6c6c6;"></div>
<div style="left:210px;top:808px;width:2px;height:2px;background:#7d929e;"></div>
<div style="left:210px;top:784px;width:2px;height:2px;background:#c6c6c6;"></div>
<div style="left:234px;top:784px;width:2px;height:2px;background:#c6c6c6;"></div>
<div style="left:258px;top:784px;width:2px;height:2px;background:#c6c6c6;"></div>
<div style="left:138px;top:808px;width:2px;height:2px;background:#7d929e;"></div>
<div style="left:338px;top:808px;width:2px;height:2px;background:#7d929e;"></div>
<div style="left:338px;top:784px;width:2px;height:2px;background:#7d929e;"></div>
<div style="left:362px;top:808px;width:2px;height:2px;background:#7d929e;"></div>
<div style="left:362px;top:784px;width:2px;height:2px;background:#c6c6c6;"></div>
<div style="left:386px;top:808px;width:2px;height:2px;background:#7d929e;"></div>
<div style="left:386px;top:784px;width:2px;height:2px;background:#c6c6c6;"></div>
<div style="left:410px;top:808px;width:2px;height:2px;background:#7d929e;"></div>
<div style="left:410px;top:784px;width:2px;height:2px;background:#c6c6c6;"></div>
<div style="left:434px;top:808px;width:2px;height:2px;background:#7d929e;"></div>
<div style="left:434px;top:784px;width:2px;height:2px;background:#c6c6c6;"></div>
<div style="left:458px;top:808px;width:2px;height:2px;background:#7d929e;"></div>
<div style="left:458px;top:784px;width:2px;height:2px;background:#c6c6c6;"></div>
<div style="left:482px;top:808px;width:2px;height:2px;background:#7d929e;"></div>
<div style="left:482px;top:784px;width:2px;height:2px;background:#c6c6c6;"></div>
<div style="left:506px;top:808px;width:2px;height:2px;background:#7d929e;"></div>
<div style="left:506px;top:784px;width:2px;height:2px;background:#c6c6c6;"></div>
<div style="left:530px;top:808px;width:2px;height:2px;background:#7d929e;"></div>
<div style="left:530px;top:784px;width:2px;height:2px;background:#c6c6c6;"></div>
<div style="left:554px;top:808px;width:2px;height:2px;background:#7d929e;"></div>
<div style="left:554px;top:784px;width:2px;height:2px;background:#c6c6c6;"></div>
<div style="left:578px;top:808px;width:2px;height:2px;background:#7d929e;"></div>
<div style="left:578px;top:784px;width:2px;height:2px;background:#c6c6c6;"></div>
<div style="left:602px;top:808px;width:2px;height:2px;background:#7d929e;"></div>
<div style="left:602px;top:784px;width:2px;height:2px;background:#c6c6c6;"></div>
<div style="left:626px;top:808px;width:2px;height:2px;background:#7d929e;"></div>
<div style="left:626px;top:784px;width:2px;height:2px;background:#c6c6c6;"></div>
<div style="left:650px;top:808px;width:2px;height:2px;background:#7d929e;"></div>
<div style="left:650px;top:784px;width:2px;height:2px;background:#c6c6c6;"></div>
<div style="left:674px;top:808px;width:2px;height:2px;background:#7d929e;"></div>
<div style="left:674px;top:784px;width:2px;height:2px;background:#c6c6c6;"></div>
<div style="left:698px;top:808px;width:2px;height:2px;background:#7d929e;"></div>
<div style="left:698px;top:784px;width:2px;height:2px;background:#c6c6c6;"></div>
<div style="left:722px;top:808px;width:2px;height:2px;background:#7d929e;"></div>
<div style="left:722px;top:784px;width:2px;height:2px;background:#c6c6c6;"></div>
<div style="left:746px;top:808px;width:2px;height:2px;background:#7d929e;"></div>
<div style="left:746px;top:784px;width:2px;height:2px;background:#c6c6c6;"></div>
<div style="left:770px;top:808px;width:2px;height:2px;background:#7d929e;"></div>
<div style="left:770px;top:784px;width:2px;height:2px;background:#c6c6c6;"></div>
<div style="left:794px;top:808px;width:2px;height:2px;background:#7d929e;"></div>
<div style="left:794px;top:784px;width:2px;height:2px;background:#c6c6c6;"></div>
<div style="left:818px;top:808px;width:2px;height:2px;background:#7d929e;"></div>
<div style="left:818px;top:784px;width:2px;height:2px;background:#c6c6c6;"></div>
<div style="left:842px;top:808px;width:2px;height:2px;background:#7d929e;"></div>
<div style="left:842px;top:784px;width:2px;height:2px;background:#c6c6c6;"></div>
<div style="left:866px;top:808px;width:2px;height:2px;background:#7d929e;"></div>
<div style="left:866px;top:784px;width:2px;height:2px;background:#c6c6c6;"></div>
<div style="left:890px;top:808px;width:2px;height:2px;background:#7d929e;"></div>
<div style="left:890px;top:784px;width:2px;height:2px;background:#c6c6c6;"></div>
<div style="left:914px;top:808px;width:2px;height:2px;background:#7d929e;"></div>
<div style="left:914px;top:784px;width:2px;height:2px;background:#c6c6c6;"></div>
<div style="left:938px;top:808px;width:2px;height:2px;background:#7d929e;"></div>
<div style="left:938px;top:784px;width:2px;height:2px;background:#c6c6c6;"></div>
<div style="left:962px;top:808px;width:2px;height:2px;background:#7d929e;"></div>
<div style="left:962px;top:784px;width:2px;height:2px;background:#c6c6c6;"></div>
<div style="left:986px;top:808px;width:2px;height:2px;background:#7d929e;"></div>
<div style="left:986px;top:784px;width:2px;height:2px;background:#c6c6c6;"></div>
<div style="left:1010px;top:808px;width:2px;height:2px;background:#7d929e;"></div>
<div style="left:1010px;top:784px;width:2px;height:2px;background:#c6c6c6;"></div>
<div style="left:1034px;top:808px;width:2px;height:2px;background:#7d929e;"></div>
<div style="left:1034px;top:784px;width:2px;height:2px;background:#c6c6c6;"></div>
<div style="left:1058px;top:808px;width:2px;height:2px;background:#7d929e;"></div>
<div style="left:1058px;top:784px;width:2px;height:2px;background:#c6c6c6;"></div>
<div style="left:1082px;top:808px;width:2px;height:2px;background:#7d929e;"></div>
<div style="left:1082px;top:784px;width:2px;height:2px;background:#c6c6c6;"></div>
<div style="left:1106px;top:808px;width:2px;height:2px;background:#7d929e;"></div>
<div style="left:1106px;top:784px;width:2px;height:2px;background:#c6c6c6;"></div>
<div style="left:1130px;top:808px;width:2px;height:2px;background:#7d929e;"></div>
<div style="left:1130px;top:784px;width:2px;height:2px;background:#c6c6c6;"></div>
<div style="left:1154px;top:808px;width:2px;height:2px;background:#7d929e;"></div>
<div style="left:1154px;top:784px;width:2px;height:2px;background:#c6c6c6;"></div>
<div style="left:1178px;top:808px;width:2px;height:2px;background:#7d929e;"></div>
<div style="left:1178px;top:784px;width:2px;height:2px;background:#c6c6c6;"></div>
<svg style="position:absolute;left:142px;top:792px" width="16" height="12" preserveAspectRatio="none" viewBox="0 0 8 6" shape-rendering="crispEdges"><path fill="#000" d="M2 0h4v1h-4zM1 1h3v1h-3zM5 1h2v1h-2zM0 2h1v1h-1zM2 2h4v1h-4zM7 2h1v1h-1zM0 3h1v1h-1zM3 3h2v1h-2zM7 3h1v1h-1zM1 4h1v1h-1zM6 4h1v1h-1zM2 5h4v1h-4z"/><path fill="#fff" d="M4 1h1v1h-1z"/></svg>
<svg style="position:absolute;left:142px;top:816px" width="16" height="12" preserveAspectRatio="none" viewBox="0 0 8 6" shape-rendering="crispEdges"><path fill="#fff" d="M2 0h4v1h-4zM1 1h3v1h-3zM5 1h2v1h-2zM0 2h1v1h-1zM2 2h4v1h-4zM7 2h1v1h-1zM0 3h1v1h-1zM3 3h2v1h-2zM7 3h1v1h-1zM1 4h1v1h-1zM6 4h1v1h-1zM2 5h4v1h-4z"/><path fill="#7d929e" d="M4 1h1v1h-1z"/></svg>
<svg style="position:absolute;left:168px;top:788px" width="12" height="16" preserveAspectRatio="none" viewBox="0 0 6 8" shape-rendering="crispEdges"><path fill="#000" d="M2 0h2v1h-2zM1 1h1v1h-1zM4 1h1v1h-1zM1 2h1v1h-1zM0 3h6v1h-6zM0 4h3v1h-3zM4 4h2v1h-2zM0 5h3v1h-3zM4 5h2v1h-2zM0 6h6v1h-6z"/><path fill="#8c8c8c" d="M3 4h1v1h-1zM3 5h1v1h-1zM0 7h6v1h-6z"/></svg>
<svg style="position:absolute;left:168px;top:812px" width="12" height="16" preserveAspectRatio="none" viewBox="0 0 6 8" shape-rendering="crispEdges"><path fill="#fff" d="M2 0h2v1h-2zM1 1h1v1h-1zM4 1h1v1h-1zM1 2h1v1h-1zM0 3h6v1h-6zM0 4h3v1h-3zM4 4h2v1h-2zM0 5h3v1h-3zM4 5h2v1h-2zM0 6h6v1h-6z"/><path fill="#7d929e" d="M3 4h1v1h-1zM3 5h1v1h-1z"/><path fill="#56636d" d="M0 7h6v1h-6z"/></svg>
<svg style="position:absolute;left:190px;top:792px" width="18" height="10" preserveAspectRatio="none" viewBox="0 0 9 5" shape-rendering="crispEdges"><path fill="#000" d="M1 0h2v1h-2zM6 0h2v1h-2zM0 1h4v1h-4zM5 1h4v1h-4zM0 2h4v1h-4zM5 2h4v1h-4zM1 3h2v1h-2zM6 3h2v1h-2z"/><path fill="#8c8c8c" d="M1 4h2v1h-2zM6 4h2v1h-2z"/></svg>
<svg style="position:absolute;left:190px;top:816px" width="18" height="10" preserveAspectRatio="none" viewBox="0 0 9 5" shape-rendering="crispEdges"><path fill="#fff" d="M1 0h2v1h-2zM6 0h2v1h-2zM0 1h4v1h-4zM5 1h4v1h-4zM0 2h4v1h-4zM5 2h4v1h-4zM1 3h2v1h-2zM6 3h2v1h-2z"/><path fill="#56636d" d="M1 4h2v1h-2zM6 4h2v1h-2z"/></svg>
<svg style="position:absolute;left:216px;top:788px" width="14" height="18" preserveAspectRatio="none" viewBox="0 0 7 9" shape-rendering="crispEdges"><path fill="#000" d="M4 0h2v1h-2zM4 1h2v1h-2zM4 2h2v1h-2zM1 3h2v1h-2zM1 4h2v1h-2zM1 5h2v1h-2zM3 6h2v1h-2zM3 7h2v1h-2zM3 8h2v1h-2z"/><path fill="#8c8c8c" d="M0 1h4v1h-4zM6 1h1v1h-1zM0 4h1v1h-1zM3 4h4v1h-4zM0 7h3v1h-3zM5 7h2v1h-2z"/></svg>
<svg style="position:absolute;left:240px;top:790px" width="14" height="14" preserveAspectRatio="none" viewBox="0 0 7 7" shape-rendering="crispEdges"><path fill="#000" d="M0 0h5v1h-5zM0 1h1v1h-1zM4 1h1v1h-1zM0 2h1v1h-1zM4 2h1v1h-1zM0 3h1v1h-1zM4 3h1v1h-1zM0 4h5v1h-5z"/><path fill="#8c8c8c" d="M5 2h2v1h-2zM6 3h1v1h-1zM6 4h1v1h-1zM2 5h1v1h-1zM6 5h1v1h-1zM2 6h5v1h-5z"/></svg>
<svg style="position:absolute;left:218px;top:814px" width="96" height="16" viewBox="0 0 48 8" shape-rendering="crispEdges"><title>Layer Copy</title><path fill="#fff" d="M0 0h1v1h-1zM0 1h1v1h-1zM0 2h1v1h-1zM0 3h1v1h-1zM0 4h1v1h-1zM0 5h4v1h-4zM6 1h2v1h-2zM8 2h1v1h-1zM6 3h3v1h-3zM5 4h1v1h-1zM8 4h1v1h-1zM6 5h3v1h-3zM10 1h1v1h-1zM13 1h1v1h-1zM10 2h1v1h-1zM13 2h1v1h-1zM10 3h1v1h-1zM13 3h1v1h-1zM11 4h3v1h-3zM13 5h1v1h-1zM11 6h2v1h-2zM16 1h2v1h-2zM15 2h1v1h-1zM18 2h1v1h-1zM15 3h4v1h-4zM15 4h1v1h-1zM16 5h2v1h-2zM20 1h1v1h-1zM22 1h1v1h-1zM20 2h2v1h-2zM20 3h1v1h-1zM20 4h1v1h-1zM20 5h1v1h-1zM29 0h3v1h-3zM28 1h1v1h-1zM28 2h1v1h-1zM28 3h1v1h-1zM28 4h1v1h-1zM29 5h3v1h-3zM34 1h2v1h-2zM33 2h1v1h-1zM36 2h1v1h-1zM33 3h1v1h-1zM36 3h1v1h-1zM33 4h1v1h-1zM36 4h1v1h-1zM34 5h2v1h-2zM38 1h3v1h-3zM38 2h1v1h-1zM41 2h1v1h-1zM38 3h1v1h-1zM41 3h1v1h-1zM38 4h3v1h-3zM38 5h1v1h-1zM38 6h1v1h-1zM43 1h1v1h-1zM46 1h1v1h-1zM43 2h1v1h-1zM46 2h1v1h-1zM43 3h1v1h-1zM46 3h1v1h-1zM44 4h3v1h-3zM46 5h1v1h-1zM44 6h2v1h-2z"/></svg>
<div style="left:344px;top:776px;width:12px;height:4px;background:#000;"></div>
<div style="left:342px;top:778px;width:2px;height:4px;background:#000;"></div>
<div style="left:340px;top:780px;width:2px;height:4px;background:#000;"></div>
<div style="left:356px;top:778px;width:2px;height:4px;background:#000;"></div>
<div style="left:358px;top:780px;width:2px;height:4px;background:#000;"></div>
<div style="left:360px;top:780px;width:4px;height:4px;background:#655561;"></div>
<div style="left:344px;top:758px;width:28px;height:18px;background:#000;"></div>
<svg style="position:absolute;left:348px;top:762px" width="20" height="16" viewBox="0 0 10 8" shape-rendering="crispEdges"><title>idl</title><path fill="#fff" d="M0 0h1v1h-1zM0 2h1v1h-1zM0 3h1v1h-1zM0 4h1v1h-1zM0 5h1v1h-1zM5 0h1v1h-1zM5 1h1v1h-1zM3 2h3v1h-3zM2 3h1v1h-1zM5 3h1v1h-1zM2 4h1v1h-1zM5 4h1v1h-1zM3 5h3v1h-3zM7 0h1v1h-1zM7 1h1v1h-1zM7 2h1v1h-1zM7 3h1v1h-1zM7 4h1v1h-1zM8 5h1v1h-1z"/></svg>
<div style="left:368px;top:776px;width:156px;height:4px;background:#000;"></div>
<div style="left:366px;top:778px;width:2px;height:4px;background:#000;"></div>
<div style="left:364px;top:780px;width:2px;height:4px;background:#000;"></div>
<div style="left:524px;top:778px;width:2px;height:4px;background:#000;"></div>
<div style="left:526px;top:780px;width:2px;height:4px;background:#000;"></div>
<div style="left:528px;top:780px;width:4px;height:4px;background:#655561;"></div>
<div style="left:368px;top:758px;width:78px;height:18px;background:#000;"></div>
<svg style="position:absolute;left:372px;top:762px" width="70" height="16" viewBox="0 0 35 8" shape-rendering="crispEdges"><title>idleAnim</title><path fill="#fff" d="M0 0h1v1h-1zM0 2h1v1h-1zM0 3h1v1h-1zM0 4h1v1h-1zM0 5h1v1h-1zM5 0h1v1h-1zM5 1h1v1h-1zM3 2h3v1h-3zM2 3h1v1h-1zM5 3h1v1h-1zM2 4h1v1h-1zM5 4h1v1h-1zM3 5h3v1h-3zM7 0h1v1h-1zM7 1h1v1h-1zM7 2h1v1h-1zM7 3h1v1h-1zM7 4h1v1h-1zM8 5h1v1h-1zM11 1h2v1h-2zM10 2h1v1h-1zM13 2h1v1h-1zM10 3h4v1h-4zM10 4h1v1h-1zM11 5h2v1h-2zM16 0h2v1h-2zM15 1h1v1h-1zM18 1h1v1h-1zM15 2h1v1h-1zM18 2h1v1h-1zM15 3h4v1h-4zM15 4h1v1h-1zM18 4h1v1h-1zM15 5h1v1h-1zM18 5h1v1h-1zM20 1h3v1h-3zM20 2h1v1h-1zM23 2h1v1h-1zM20 3h1v1h-1zM23 3h1v1h-1zM20 4h1v1h-1zM23 4h1v1h-1zM20 5h1v1h-1zM23 5h1v1h-1zM25 0h1v1h-1zM25 2h1v1h-1zM25 3h1v1h-1zM25 4h1v1h-1zM25 5h1v1h-1zM27 1h6v1h-6zM27 2h1v1h-1zM30 2h1v1h-1zM33 2h1v1h-1zM27 3h1v1h-1zM30 3h1v1h-1zM33 3h1v1h-1zM27 4h1v1h-1zM30 4h1v1h-1zM33 4h1v1h-1zM27 5h1v1h-1zM30 5h1v1h-1zM33 5h1v1h-1z"/></svg>
<div style="left:536px;top:776px;width:84px;height:4px;background:#000;"></div>
<div style="left:534px;top:778px;width:2px;height:4px;background:#000;"></div>
<div style="left:532px;top:780px;width:2px;height:4px;background:#000;"></div>
<div style="left:620px;top:778px;width:2px;height:4px;background:#000;"></div>
<div style="left:622px;top:780px;width:2px;height:4px;background:#000;"></div>
<div style="left:624px;top:780px;width:4px;height:4px;background:#655561;"></div>
<div style="left:536px;top:758px;width:46px;height:18px;background:#000;"></div>
<svg style="position:absolute;left:540px;top:762px" width="38" height="16" viewBox="0 0 19 8" shape-rendering="crispEdges"><title>walk</title><path fill="#fff" d="M0 1h1v1h-1zM4 1h1v1h-1zM0 2h1v1h-1zM4 2h1v1h-1zM0 3h1v1h-1zM2 3h1v1h-1zM4 3h1v1h-1zM0 4h1v1h-1zM2 4h1v1h-1zM4 4h1v1h-1zM1 5h1v1h-1zM3 5h1v1h-1zM7 1h2v1h-2zM9 2h1v1h-1zM7 3h3v1h-3zM6 4h1v1h-1zM9 4h1v1h-1zM7 5h3v1h-3zM11 0h1v1h-1zM11 1h1v1h-1zM11 2h1v1h-1zM11 3h1v1h-1zM11 4h1v1h-1zM12 5h1v1h-1zM14 0h1v1h-1zM14 1h1v1h-1zM17 1h1v1h-1zM14 2h1v1h-1zM16 2h1v1h-1zM14 3h2v1h-2zM14 4h1v1h-1zM16 4h1v1h-1zM14 5h1v1h-1zM17 5h1v1h-1z"/></svg>
<div style="left:632px;top:776px;width:132px;height:4px;background:#000;"></div>
<div style="left:630px;top:778px;width:2px;height:4px;background:#000;"></div>
<div style="left:628px;top:780px;width:2px;height:4px;background:#000;"></div>
<div style="left:764px;top:778px;width:2px;height:4px;background:#000;"></div>
<div style="left:766px;top:780px;width:2px;height:4px;background:#000;"></div>
<div style="left:768px;top:780px;width:4px;height:4px;background:#655561;"></div>
<div style="left:632px;top:758px;width:36px;height:18px;background:#000;"></div>
<svg style="position:absolute;left:636px;top:762px" width="28" height="16" viewBox="0 0 14 8" shape-rendering="crispEdges"><title>run</title><path fill="#fff" d="M0 1h1v1h-1zM2 1h1v1h-1zM0 2h2v1h-2zM0 3h1v1h-1zM0 4h1v1h-1zM0 5h1v1h-1zM4 1h1v1h-1zM7 1h1v1h-1zM4 2h1v1h-1zM7 2h1v1h-1zM4 3h1v1h-1zM7 3h1v1h-1zM4 4h1v1h-1zM7 4h1v1h-1zM5 5h3v1h-3zM9 1h3v1h-3zM9 2h1v1h-1zM12 2h1v1h-1zM9 3h1v1h-1zM12 3h1v1h-1zM9 4h1v1h-1zM12 4h1v1h-1zM9 5h1v1h-1zM12 5h1v1h-1z"/></svg>
<div style="left:776px;top:776px;width:12px;height:4px;background:#000;"></div>
<div style="left:774px;top:778px;width:2px;height:4px;background:#000;"></div>
<div style="left:772px;top:780px;width:2px;height:4px;background:#000;"></div>
<div style="left:788px;top:778px;width:2px;height:4px;background:#000;"></div>
<div style="left:790px;top:780px;width:2px;height:4px;background:#000;"></div>
<div style="left:792px;top:780px;width:4px;height:4px;background:#655561;"></div>
<div style="left:776px;top:758px;width:24px;height:18px;background:#000;"></div>
<svg style="position:absolute;left:780px;top:762px" width="16" height="16" viewBox="0 0 8 8" shape-rendering="crispEdges"><title>jp</title><path fill="#fff" d="M1 0h1v1h-1zM1 2h1v1h-1zM1 3h1v1h-1zM1 4h1v1h-1zM1 5h1v1h-1zM0 6h1v1h-1zM3 1h3v1h-3zM3 2h1v1h-1zM6 2h1v1h-1zM3 3h1v1h-1zM6 3h1v1h-1zM3 4h3v1h-3zM3 5h1v1h-1zM3 6h1v1h-1z"/></svg>
<div style="left:800px;top:776px;width:132px;height:4px;background:#000;"></div>
<div style="left:798px;top:778px;width:2px;height:4px;background:#000;"></div>
<div style="left:796px;top:780px;width:2px;height:4px;background:#000;"></div>
<div style="left:932px;top:778px;width:2px;height:4px;background:#000;"></div>
<div style="left:934px;top:780px;width:2px;height:4px;background:#000;"></div>
<div style="left:936px;top:780px;width:4px;height:4px;background:#655561;"></div>
<div style="left:800px;top:758px;width:114px;height:18px;background:#000;"></div>
<svg style="position:absolute;left:804px;top:762px" width="106" height="16" viewBox="0 0 53 8" shape-rendering="crispEdges"><title>double jump</title><path fill="#fff" d="M3 0h1v1h-1zM3 1h1v1h-1zM1 2h3v1h-3zM0 3h1v1h-1zM3 3h1v1h-1zM0 4h1v1h-1zM3 4h1v1h-1zM1 5h3v1h-3zM6 1h2v1h-2zM5 2h1v1h-1zM8 2h1v1h-1zM5 3h1v1h-1zM8 3h1v1h-1zM5 4h1v1h-1zM8 4h1v1h-1zM6 5h2v1h-2zM10 1h1v1h-1zM13 1h1v1h-1zM10 2h1v1h-1zM13 2h1v1h-1zM10 3h1v1h-1zM13 3h1v1h-1zM10 4h1v1h-1zM13 4h1v1h-1zM11 5h3v1h-3zM15 0h1v1h-1zM15 1h1v1h-1zM15 2h3v1h-3zM15 3h1v1h-1zM18 3h1v1h-1zM15 4h1v1h-1zM18 4h1v1h-1zM15 5h3v1h-3zM20 0h1v1h-1zM20 1h1v1h-1zM20 2h1v1h-1zM20 3h1v1h-1zM20 4h1v1h-1zM21 5h1v1h-1zM24 1h2v1h-2zM23 2h1v1h-1zM26 2h1v1h-1zM23 3h4v1h-4zM23 4h1v1h-1zM24 5h2v1h-2zM33 0h1v1h-1zM33 2h1v1h-1zM33 3h1v1h-1zM33 4h1v1h-1zM33 5h1v1h-1zM32 6h1v1h-1zM35 1h1v1h-1zM38 1h1v1h-1zM35 2h1v1h-1zM38 2h1v1h-1zM35 3h1v1h-1zM38 3h1v1h-1zM35 4h1v1h-1zM38 4h1v1h-1zM36 5h3v1h-3zM40 1h6v1h-6zM40 2h1v1h-1zM43 2h1v1h-1zM46 2h1v1h-1zM40 3h1v1h-1zM43 3h1v1h-1zM46 3h1v1h-1zM40 4h1v1h-1zM43 4h1v1h-1zM46 4h1v1h-1zM40 5h1v1h-1zM43 5h1v1h-1zM46 5h1v1h-1zM48 1h3v1h-3zM48 2h1v1h-1zM51 2h1v1h-1zM48 3h1v1h-1zM51 3h1v1h-1zM48 4h3v1h-3zM48 5h1v1h-1zM48 6h1v1h-1z"/></svg>
<div style="left:944px;top:776px;width:84px;height:4px;background:#000;"></div>
<div style="left:942px;top:778px;width:2px;height:4px;background:#000;"></div>
<div style="left:940px;top:780px;width:2px;height:4px;background:#000;"></div>
<div style="left:1028px;top:778px;width:2px;height:4px;background:#000;"></div>
<div style="left:1030px;top:780px;width:2px;height:4px;background:#000;"></div>
<div style="left:1032px;top:780px;width:4px;height:4px;background:#655561;"></div>
<div style="left:944px;top:758px;width:38px;height:18px;background:#000;"></div>
<svg style="position:absolute;left:948px;top:762px" width="30" height="16" viewBox="0 0 15 8" shape-rendering="crispEdges"><title>roll</title><path fill="#fff" d="M0 1h1v1h-1zM2 1h1v1h-1zM0 2h2v1h-2zM0 3h1v1h-1zM0 4h1v1h-1zM0 5h1v1h-1zM5 1h2v1h-2zM4 2h1v1h-1zM7 2h1v1h-1zM4 3h1v1h-1zM7 3h1v1h-1zM4 4h1v1h-1zM7 4h1v1h-1zM5 5h2v1h-2zM9 0h1v1h-1zM9 1h1v1h-1zM9 2h1v1h-1zM9 3h1v1h-1zM9 4h1v1h-1zM10 5h1v1h-1zM12 0h1v1h-1zM12 1h1v1h-1zM12 2h1v1h-1zM12 3h1v1h-1zM12 4h1v1h-1zM13 5h1v1h-1z"/></svg>
<div style="left:1040px;top:776px;width:12px;height:4px;background:#000;"></div>
<div style="left:1038px;top:778px;width:2px;height:4px;background:#000;"></div>
<div style="left:1036px;top:780px;width:2px;height:4px;background:#000;"></div>
<div style="left:1052px;top:778px;width:2px;height:4px;background:#000;"></div>
<div style="left:1054px;top:780px;width:2px;height:4px;background:#000;"></div>
<div style="left:1056px;top:780px;width:4px;height:4px;background:#655561;"></div>
<div style="left:1040px;top:758px;width:32px;height:18px;background:#000;"></div>
<svg style="position:absolute;left:1044px;top:762px" width="24" height="16" viewBox="0 0 12 8" shape-rendering="crispEdges"><title>hrl</title><path fill="#fff" d="M0 0h1v1h-1zM0 1h1v1h-1zM0 2h3v1h-3zM0 3h1v1h-1zM3 3h1v1h-1zM0 4h1v1h-1zM3 4h1v1h-1zM0 5h1v1h-1zM3 5h1v1h-1zM5 1h1v1h-1zM7 1h1v1h-1zM5 2h2v1h-2zM5 3h1v1h-1zM5 4h1v1h-1zM5 5h1v1h-1zM9 0h1v1h-1zM9 1h1v1h-1zM9 2h1v1h-1zM9 3h1v1h-1zM9 4h1v1h-1zM10 5h1v1h-1z"/></svg>
<div style="left:1064px;top:776px;width:60px;height:4px;background:#000;"></div>
<div style="left:1062px;top:778px;width:2px;height:4px;background:#000;"></div>
<div style="left:1060px;top:780px;width:2px;height:4px;background:#000;"></div>
<div style="left:1124px;top:778px;width:2px;height:4px;background:#000;"></div>
<div style="left:1126px;top:780px;width:2px;height:4px;background:#000;"></div>
<div style="left:1128px;top:780px;width:4px;height:4px;background:#655561;"></div>
<div style="left:1064px;top:758px;width:52px;height:18px;background:#000;"></div>
<svg style="position:absolute;left:1068px;top:762px" width="44" height="16" viewBox="0 0 22 8" shape-rendering="crispEdges"><title>wings</title><path fill="#fff" d="M0 1h1v1h-1zM4 1h1v1h-1zM0 2h1v1h-1zM4 2h1v1h-1zM0 3h1v1h-1zM2 3h1v1h-1zM4 3h1v1h-1zM0 4h1v1h-1zM2 4h1v1h-1zM4 4h1v1h-1zM1 5h1v1h-1zM3 5h1v1h-1zM6 0h1v1h-1zM6 2h1v1h-1zM6 3h1v1h-1zM6 4h1v1h-1zM6 5h1v1h-1zM8 1h3v1h-3zM8 2h1v1h-1zM11 2h1v1h-1zM8 3h1v1h-1zM11 3h1v1h-1zM8 4h1v1h-1zM11 4h1v1h-1zM8 5h1v1h-1zM11 5h1v1h-1zM14 1h2v1h-2zM13 2h1v1h-1zM16 2h1v1h-1zM13 3h1v1h-1zM16 3h1v1h-1zM14 4h3v1h-3zM16 5h1v1h-1zM14 6h2v1h-2zM19 1h2v1h-2zM18 2h1v1h-1zM19 3h1v1h-1zM20 4h1v1h-1zM18 5h2v1h-2z"/></svg>
<div style="left:1136px;top:776px;width:12px;height:4px;background:#000;"></div>
<div style="left:1134px;top:778px;width:2px;height:4px;background:#000;"></div>
<div style="left:1132px;top:780px;width:2px;height:4px;background:#000;"></div>
<div style="left:1148px;top:778px;width:2px;height:4px;background:#000;"></div>
<div style="left:1150px;top:780px;width:2px;height:4px;background:#000;"></div>
<div style="left:1152px;top:780px;width:4px;height:4px;background:#655561;"></div>
<div style="left:1136px;top:758px;width:30px;height:18px;background:#000;"></div>
<svg style="position:absolute;left:1140px;top:762px" width="22" height="16" viewBox="0 0 11 8" shape-rendering="crispEdges"><title>srf</title><path fill="#fff" d="M1 1h2v1h-2zM0 2h1v1h-1zM1 3h1v1h-1zM2 4h1v1h-1zM0 5h2v1h-2zM4 1h1v1h-1zM6 1h1v1h-1zM4 2h2v1h-2zM4 3h1v1h-1zM4 4h1v1h-1zM4 5h1v1h-1zM9 0h1v1h-1zM8 1h1v1h-1zM8 2h2v1h-2zM8 3h1v1h-1zM8 4h1v1h-1zM8 5h1v1h-1z"/></svg>
<div style="left:1160px;top:776px;width:12px;height:4px;background:#000;"></div>
<div style="left:1158px;top:778px;width:2px;height:4px;background:#000;"></div>
<div style="left:1156px;top:780px;width:2px;height:4px;background:#000;"></div>
<div style="left:1172px;top:778px;width:2px;height:4px;background:#000;"></div>
<div style="left:1174px;top:780px;width:2px;height:4px;background:#000;"></div>
<div style="left:1176px;top:780px;width:4px;height:4px;background:#655561;"></div>
<div style="left:1160px;top:758px;width:32px;height:18px;background:#000;"></div>
<svg style="position:absolute;left:1164px;top:762px" width="24" height="16" viewBox="0 0 12 8" shape-rendering="crispEdges"><title>bst</title><path fill="#fff" d="M0 0h1v1h-1zM0 1h1v1h-1zM0 2h3v1h-3zM0 3h1v1h-1zM3 3h1v1h-1zM0 4h1v1h-1zM3 4h1v1h-1zM0 5h3v1h-3zM6 1h2v1h-2zM5 2h1v1h-1zM6 3h1v1h-1zM7 4h1v1h-1zM5 5h2v1h-2zM9 0h1v1h-1zM9 1h2v1h-2zM9 2h1v1h-1zM9 3h1v1h-1zM9 4h1v1h-1zM10 5h1v1h-1z"/></svg>
<div style="left:0px;top:21px;width:320px;height:322px;background:#000;"></div>
<div style="left:2px;top:23px;width:316px;height:318px;background:#fff;"></div>
<div style="left:4px;top:25px;width:312px;height:312px;background:#d3cbbe;"></div>
<div style="left:2px;top:339px;width:316px;height:2px;background:#9e8a7e;"></div>
<svg style="position:absolute;left:24px;top:31px" width="44" height="16" viewBox="0 0 22 8" shape-rendering="crispEdges"><title>New...</title><path fill="#000" d="M0 0h1v1h-1zM3 0h1v1h-1zM0 1h2v1h-2zM3 1h1v1h-1zM0 2h1v1h-1zM2 2h2v1h-2zM0 3h1v1h-1zM3 3h1v1h-1zM0 4h1v1h-1zM3 4h1v1h-1zM0 5h1v1h-1zM3 5h1v1h-1zM6 1h2v1h-2zM5 2h1v1h-1zM8 2h1v1h-1zM5 3h4v1h-4zM5 4h1v1h-1zM6 5h2v1h-2zM10 1h1v1h-1zM14 1h1v1h-1zM10 2h1v1h-1zM14 2h1v1h-1zM10 3h1v1h-1zM12 3h1v1h-1zM14 3h1v1h-1zM10 4h1v1h-1zM12 4h1v1h-1zM14 4h1v1h-1zM11 5h1v1h-1zM13 5h1v1h-1zM16 5h1v1h-1zM18 5h1v1h-1zM20 5h1v1h-1zM0 7h5v1h-5z"/></svg>
<svg style="position:absolute;left:252px;top:31px" width="52" height="16" viewBox="0 0 26 8" shape-rendering="crispEdges"><title>Ctrl+N</title><path fill="#000" d="M1 0h3v1h-3zM0 1h1v1h-1zM0 2h1v1h-1zM0 3h1v1h-1zM0 4h1v1h-1zM1 5h3v1h-3zM5 0h1v1h-1zM5 1h2v1h-2zM5 2h1v1h-1zM5 3h1v1h-1zM5 4h1v1h-1zM6 5h1v1h-1zM8 1h1v1h-1zM10 1h1v1h-1zM8 2h2v1h-2zM8 3h1v1h-1zM8 4h1v1h-1zM8 5h1v1h-1zM12 0h1v1h-1zM12 1h1v1h-1zM12 2h1v1h-1zM12 3h1v1h-1zM12 4h1v1h-1zM13 5h1v1h-1zM17 1h1v1h-1zM17 2h1v1h-1zM15 3h5v1h-5zM17 4h1v1h-1zM17 5h1v1h-1zM21 0h1v1h-1zM24 0h1v1h-1zM21 1h2v1h-2zM24 1h1v1h-1zM21 2h1v1h-1zM23 2h2v1h-2zM21 3h1v1h-1zM24 3h1v1h-1zM21 4h1v1h-1zM24 4h1v1h-1zM21 5h1v1h-1zM24 5h1v1h-1z"/></svg>
<svg style="position:absolute;left:24px;top:53px" width="54" height="16" viewBox="0 0 27 8" shape-rendering="crispEdges"><title>Open...</title><path fill="#000" d="M1 0h3v1h-3zM0 1h1v1h-1zM4 1h1v1h-1zM0 2h1v1h-1zM4 2h1v1h-1zM0 3h1v1h-1zM4 3h1v1h-1zM0 4h1v1h-1zM4 4h1v1h-1zM1 5h3v1h-3zM6 1h3v1h-3zM6 2h1v1h-1zM9 2h1v1h-1zM6 3h1v1h-1zM9 3h1v1h-1zM6 4h3v1h-3zM6 5h1v1h-1zM6 6h1v1h-1zM12 1h2v1h-2zM11 2h1v1h-1zM14 2h1v1h-1zM11 3h4v1h-4zM11 4h1v1h-1zM12 5h2v1h-2zM16 1h3v1h-3zM16 2h1v1h-1zM19 2h1v1h-1zM16 3h1v1h-1zM19 3h1v1h-1zM16 4h1v1h-1zM19 4h1v1h-1zM16 5h1v1h-1zM19 5h1v1h-1zM21 5h1v1h-1zM23 5h1v1h-1zM25 5h1v1h-1zM0 7h6v1h-6z"/></svg>
<svg style="position:absolute;left:250px;top:53px" width="54" height="16" viewBox="0 0 27 8" shape-rendering="crispEdges"><title>Ctrl+O</title><path fill="#000" d="M1 0h3v1h-3zM0 1h1v1h-1zM0 2h1v1h-1zM0 3h1v1h-1zM0 4h1v1h-1zM1 5h3v1h-3zM5 0h1v1h-1zM5 1h2v1h-2zM5 2h1v1h-1zM5 3h1v1h-1zM5 4h1v1h-1zM6 5h1v1h-1zM8 1h1v1h-1zM10 1h1v1h-1zM8 2h2v1h-2zM8 3h1v1h-1zM8 4h1v1h-1zM8 5h1v1h-1zM12 0h1v1h-1zM12 1h1v1h-1zM12 2h1v1h-1zM12 3h1v1h-1zM12 4h1v1h-1zM13 5h1v1h-1zM17 1h1v1h-1zM17 2h1v1h-1zM15 3h5v1h-5zM17 4h1v1h-1zM17 5h1v1h-1zM22 0h3v1h-3zM21 1h1v1h-1zM25 1h1v1h-1zM21 2h1v1h-1zM25 2h1v1h-1zM21 3h1v1h-1zM25 3h1v1h-1zM21 4h1v1h-1zM25 4h1v1h-1zM22 5h3v1h-3z"/></svg>
<svg style="position:absolute;left:24px;top:75px" width="106" height="16" viewBox="0 0 53 8" shape-rendering="crispEdges"><title>Open Recent</title><path fill="#000" d="M1 0h3v1h-3zM0 1h1v1h-1zM4 1h1v1h-1zM0 2h1v1h-1zM4 2h1v1h-1zM0 3h1v1h-1zM4 3h1v1h-1zM0 4h1v1h-1zM4 4h1v1h-1zM1 5h3v1h-3zM6 1h3v1h-3zM6 2h1v1h-1zM9 2h1v1h-1zM6 3h1v1h-1zM9 3h1v1h-1zM6 4h3v1h-3zM6 5h1v1h-1zM6 6h1v1h-1zM12 1h2v1h-2zM11 2h1v1h-1zM14 2h1v1h-1zM11 3h4v1h-4zM11 4h1v1h-1zM12 5h2v1h-2zM16 1h3v1h-3zM16 2h1v1h-1zM19 2h1v1h-1zM16 3h1v1h-1zM19 3h1v1h-1zM16 4h1v1h-1zM19 4h1v1h-1zM16 5h1v1h-1zM19 5h1v1h-1zM25 0h3v1h-3zM25 1h1v1h-1zM28 1h1v1h-1zM25 2h1v1h-1zM28 2h1v1h-1zM25 3h3v1h-3zM25 4h1v1h-1zM28 4h1v1h-1zM25 5h1v1h-1zM28 5h1v1h-1zM31 1h2v1h-2zM30 2h1v1h-1zM33 2h1v1h-1zM30 3h4v1h-4zM30 4h1v1h-1zM31 5h2v1h-2zM36 1h3v1h-3zM35 2h1v1h-1zM35 3h1v1h-1zM35 4h1v1h-1zM36 5h3v1h-3zM41 1h2v1h-2zM40 2h1v1h-1zM43 2h1v1h-1zM40 3h4v1h-4zM40 4h1v1h-1zM41 5h2v1h-2zM45 1h3v1h-3zM45 2h1v1h-1zM48 2h1v1h-1zM45 3h1v1h-1zM48 3h1v1h-1zM45 4h1v1h-1zM48 4h1v1h-1zM45 5h1v1h-1zM48 5h1v1h-1zM50 0h1v1h-1zM50 1h2v1h-2zM50 2h1v1h-1zM50 3h1v1h-1zM50 4h1v1h-1zM51 5h1v1h-1zM25 7h5v1h-5z"/></svg>
<div style="left:6px;top:97px;width:308px;height:2px;background:repeating-linear-gradient(90deg,#8e7b70 0 4px,transparent 4px 6px)"></div>
<svg style="position:absolute;left:24px;top:105px" width="40" height="16" viewBox="0 0 20 8" shape-rendering="crispEdges"><title>Save</title><path fill="#000" d="M1 0h3v1h-3zM0 1h1v1h-1zM1 2h2v1h-2zM3 3h1v1h-1zM3 4h1v1h-1zM0 5h3v1h-3zM6 1h2v1h-2zM8 2h1v1h-1zM6 3h3v1h-3zM5 4h1v1h-1zM8 4h1v1h-1zM6 5h3v1h-3zM10 1h1v1h-1zM13 1h1v1h-1zM10 2h1v1h-1zM13 2h1v1h-1zM10 3h1v1h-1zM13 3h1v1h-1zM11 4h1v1h-1zM13 4h1v1h-1zM12 5h1v1h-1zM16 1h2v1h-2zM15 2h1v1h-1zM18 2h1v1h-1zM15 3h4v1h-4zM15 4h1v1h-1zM16 5h2v1h-2zM0 7h5v1h-5z"/></svg>
<svg style="position:absolute;left:252px;top:105px" width="52" height="16" viewBox="0 0 26 8" shape-rendering="crispEdges"><title>Ctrl+S</title><path fill="#000" d="M1 0h3v1h-3zM0 1h1v1h-1zM0 2h1v1h-1zM0 3h1v1h-1zM0 4h1v1h-1zM1 5h3v1h-3zM5 0h1v1h-1zM5 1h2v1h-2zM5 2h1v1h-1zM5 3h1v1h-1zM5 4h1v1h-1zM6 5h1v1h-1zM8 1h1v1h-1zM10 1h1v1h-1zM8 2h2v1h-2zM8 3h1v1h-1zM8 4h1v1h-1zM8 5h1v1h-1zM12 0h1v1h-1zM12 1h1v1h-1zM12 2h1v1h-1zM12 3h1v1h-1zM12 4h1v1h-1zM13 5h1v1h-1zM17 1h1v1h-1zM17 2h1v1h-1zM15 3h5v1h-5zM17 4h1v1h-1zM17 5h1v1h-1zM22 0h3v1h-3zM21 1h1v1h-1zM22 2h2v1h-2zM24 3h1v1h-1zM24 4h1v1h-1zM21 5h3v1h-3z"/></svg>
<svg style="position:absolute;left:24px;top:127px" width="78" height="16" viewBox="0 0 39 8" shape-rendering="crispEdges"><title>Save As...</title><path fill="#000" d="M1 0h3v1h-3zM0 1h1v1h-1zM1 2h2v1h-2zM3 3h1v1h-1zM3 4h1v1h-1zM0 5h3v1h-3zM6 1h2v1h-2zM8 2h1v1h-1zM6 3h3v1h-3zM5 4h1v1h-1zM8 4h1v1h-1zM6 5h3v1h-3zM10 1h1v1h-1zM13 1h1v1h-1zM10 2h1v1h-1zM13 2h1v1h-1zM10 3h1v1h-1zM13 3h1v1h-1zM11 4h1v1h-1zM13 4h1v1h-1zM12 5h1v1h-1zM16 1h2v1h-2zM15 2h1v1h-1zM18 2h1v1h-1zM15 3h4v1h-4zM15 4h1v1h-1zM16 5h2v1h-2zM25 0h2v1h-2zM24 1h1v1h-1zM27 1h1v1h-1zM24 2h1v1h-1zM27 2h1v1h-1zM24 3h4v1h-4zM24 4h1v1h-1zM27 4h1v1h-1zM24 5h1v1h-1zM27 5h1v1h-1zM30 1h2v1h-2zM29 2h1v1h-1zM30 3h1v1h-1zM31 4h1v1h-1zM29 5h2v1h-2zM33 5h1v1h-1zM35 5h1v1h-1zM37 5h1v1h-1z"/></svg>
<svg style="position:absolute;left:204px;top:127px" width="100" height="16" viewBox="0 0 50 8" shape-rendering="crispEdges"><title>Ctrl+Shift+S</title><path fill="#000" d="M1 0h3v1h-3zM0 1h1v1h-1zM0 2h1v1h-1zM0 3h1v1h-1zM0 4h1v1h-1zM1 5h3v1h-3zM5 0h1v1h-1zM5 1h2v1h-2zM5 2h1v1h-1zM5 3h1v1h-1zM5 4h1v1h-1zM6 5h1v1h-1zM8 1h1v1h-1zM10 1h1v1h-1zM8 2h2v1h-2zM8 3h1v1h-1zM8 4h1v1h-1zM8 5h1v1h-1zM12 0h1v1h-1zM12 1h1v1h-1zM12 2h1v1h-1zM12 3h1v1h-1zM12 4h1v1h-1zM13 5h1v1h-1zM17 1h1v1h-1zM17 2h1v1h-1zM15 3h5v1h-5zM17 4h1v1h-1zM17 5h1v1h-1zM22 0h3v1h-3zM21 1h1v1h-1zM22 2h2v1h-2zM24 3h1v1h-1zM24 4h1v1h-1zM21 5h3v1h-3zM26 0h1v1h-1zM26 1h1v1h-1zM26 2h3v1h-3zM26 3h1v1h-1zM29 3h1v1h-1zM26 4h1v1h-1zM29 4h1v1h-1zM26 5h1v1h-1zM29 5h1v1h-1zM31 0h1v1h-1zM31 2h1v1h-1zM31 3h1v1h-1zM31 4h1v1h-1zM31 5h1v1h-1zM34 0h1v1h-1zM33 1h1v1h-1zM33 2h2v1h-2zM33 3h1v1h-1zM33 4h1v1h-1zM33 5h1v1h-1zM36 0h1v1h-1zM36 1h2v1h-2zM36 2h1v1h-1zM36 3h1v1h-1zM36 4h1v1h-1zM37 5h1v1h-1zM41 1h1v1h-1zM41 2h1v1h-1zM39 3h5v1h-5zM41 4h1v1h-1zM41 5h1v1h-1zM46 0h3v1h-3zM45 1h1v1h-1zM46 2h2v1h-2zM48 3h1v1h-1zM48 4h1v1h-1zM45 5h3v1h-3z"/></svg>
<div style="left:4px;top:144px;width:312px;height:23px;background:#7d929e;"></div>
<svg style="position:absolute;left:24px;top:149px" width="68" height="16" viewBox="0 0 34 8" shape-rendering="crispEdges"><title>Export...</title><path fill="#fff" d="M0 0h4v1h-4zM0 1h1v1h-1zM0 2h3v1h-3zM0 3h1v1h-1zM0 4h1v1h-1zM0 5h4v1h-4zM5 1h1v1h-1zM9 1h1v1h-1zM6 2h1v1h-1zM8 2h1v1h-1zM7 3h1v1h-1zM6 4h1v1h-1zM8 4h1v1h-1zM5 5h1v1h-1zM9 5h1v1h-1zM11 1h3v1h-3zM11 2h1v1h-1zM14 2h1v1h-1zM11 3h1v1h-1zM14 3h1v1h-1zM11 4h3v1h-3zM11 5h1v1h-1zM11 6h1v1h-1zM17 1h2v1h-2zM16 2h1v1h-1zM19 2h1v1h-1zM16 3h1v1h-1zM19 3h1v1h-1zM16 4h1v1h-1zM19 4h1v1h-1zM17 5h2v1h-2zM21 1h1v1h-1zM23 1h1v1h-1zM21 2h2v1h-2zM21 3h1v1h-1zM21 4h1v1h-1zM21 5h1v1h-1zM25 0h1v1h-1zM25 1h2v1h-2zM25 2h1v1h-1zM25 3h1v1h-1zM25 4h1v1h-1zM26 5h1v1h-1zM28 5h1v1h-1zM30 5h1v1h-1zM32 5h1v1h-1zM5 7h6v1h-6z"/></svg>
<svg style="position:absolute;left:170px;top:149px" width="134" height="16" viewBox="0 0 67 8" shape-rendering="crispEdges"><title>Ctrl+Alt+Shift+S</title><path fill="#fff" d="M1 0h3v1h-3zM0 1h1v1h-1zM0 2h1v1h-1zM0 3h1v1h-1zM0 4h1v1h-1zM1 5h3v1h-3zM5 0h1v1h-1zM5 1h2v1h-2zM5 2h1v1h-1zM5 3h1v1h-1zM5 4h1v1h-1zM6 5h1v1h-1zM8 1h1v1h-1zM10 1h1v1h-1zM8 2h2v1h-2zM8 3h1v1h-1zM8 4h1v1h-1zM8 5h1v1h-1zM12 0h1v1h-1zM12 1h1v1h-1zM12 2h1v1h-1zM12 3h1v1h-1zM12 4h1v1h-1zM13 5h1v1h-1zM17 1h1v1h-1zM17 2h1v1h-1zM15 3h5v1h-5zM17 4h1v1h-1zM17 5h1v1h-1zM22 0h2v1h-2zM21 1h1v1h-1zM24 1h1v1h-1zM21 2h1v1h-1zM24 2h1v1h-1zM21 3h4v1h-4zM21 4h1v1h-1zM24 4h1v1h-1zM21 5h1v1h-1zM24 5h1v1h-1zM26 0h1v1h-1zM26 1h1v1h-1zM26 2h1v1h-1zM26 3h1v1h-1zM26 4h1v1h-1zM27 5h1v1h-1zM29 0h1v1h-1zM29 1h2v1h-2zM29 2h1v1h-1zM29 3h1v1h-1zM29 4h1v1h-1zM30 5h1v1h-1zM34 1h1v1h-1zM34 2h1v1h-1zM32 3h5v1h-5zM34 4h1v1h-1zM34 5h1v1h-1zM39 0h3v1h-3zM38 1h1v1h-1zM39 2h2v1h-2zM41 3h1v1h-1zM41 4h1v1h-1zM38 5h3v1h-3zM43 0h1v1h-1zM43 1h1v1h-1zM43 2h3v1h-3zM43 3h1v1h-1zM46 3h1v1h-1zM43 4h1v1h-1zM46 4h1v1h-1zM43 5h1v1h-1zM46 5h1v1h-1zM48 0h1v1h-1zM48 2h1v1h-1zM48 3h1v1h-1zM48 4h1v1h-1zM48 5h1v1h-1zM51 0h1v1h-1zM50 1h1v1h-1zM50 2h2v1h-2zM50 3h1v1h-1zM50 4h1v1h-1zM50 5h1v1h-1zM53 0h1v1h-1zM53 1h2v1h-2zM53 2h1v1h-1zM53 3h1v1h-1zM53 4h1v1h-1zM54 5h1v1h-1zM58 1h1v1h-1zM58 2h1v1h-1zM56 3h5v1h-5zM58 4h1v1h-1zM58 5h1v1h-1zM63 0h3v1h-3zM62 1h1v1h-1zM63 2h2v1h-2zM65 3h1v1h-1zM65 4h1v1h-1zM62 5h3v1h-3z"/></svg>
<svg style="position:absolute;left:26px;top:173px" width="60" height="16" viewBox="0 0 30 8" shape-rendering="crispEdges"><title>Share...</title><path fill="#fff" d="M1 0h3v1h-3zM0 1h1v1h-1zM1 2h2v1h-2zM3 3h1v1h-1zM3 4h1v1h-1zM0 5h3v1h-3zM5 0h1v1h-1zM5 1h1v1h-1zM5 2h3v1h-3zM5 3h1v1h-1zM8 3h1v1h-1zM5 4h1v1h-1zM8 4h1v1h-1zM5 5h1v1h-1zM8 5h1v1h-1zM11 1h2v1h-2zM13 2h1v1h-1zM11 3h3v1h-3zM10 4h1v1h-1zM13 4h1v1h-1zM11 5h3v1h-3zM15 1h1v1h-1zM17 1h1v1h-1zM15 2h2v1h-2zM15 3h1v1h-1zM15 4h1v1h-1zM15 5h1v1h-1zM20 1h2v1h-2zM19 2h1v1h-1zM22 2h1v1h-1zM19 3h4v1h-4zM19 4h1v1h-1zM20 5h2v1h-2zM24 5h1v1h-1zM26 5h1v1h-1zM28 5h1v1h-1z"/></svg>
<svg style="position:absolute;left:24px;top:171px" width="60" height="16" viewBox="0 0 30 8" shape-rendering="crispEdges"><title>Share...</title><path fill="#8e7b70" d="M1 0h3v1h-3zM0 1h1v1h-1zM1 2h2v1h-2zM3 3h1v1h-1zM3 4h1v1h-1zM0 5h3v1h-3zM5 0h1v1h-1zM5 1h1v1h-1zM5 2h3v1h-3zM5 3h1v1h-1zM8 3h1v1h-1zM5 4h1v1h-1zM8 4h1v1h-1zM5 5h1v1h-1zM8 5h1v1h-1zM11 1h2v1h-2zM13 2h1v1h-1zM11 3h3v1h-3zM10 4h1v1h-1zM13 4h1v1h-1zM11 5h3v1h-3zM15 1h1v1h-1zM17 1h1v1h-1zM15 2h2v1h-2zM15 3h1v1h-1zM15 4h1v1h-1zM15 5h1v1h-1zM20 1h2v1h-2zM19 2h1v1h-1zM22 2h1v1h-1zM19 3h4v1h-4zM19 4h1v1h-1zM20 5h2v1h-2zM24 5h1v1h-1zM26 5h1v1h-1zM28 5h1v1h-1z"/></svg>
<svg style="position:absolute;left:24px;top:193px" width="44" height="16" viewBox="0 0 22 8" shape-rendering="crispEdges"><title>Close</title><path fill="#000" d="M1 0h3v1h-3zM0 1h1v1h-1zM0 2h1v1h-1zM0 3h1v1h-1zM0 4h1v1h-1zM1 5h3v1h-3zM5 0h1v1h-1zM5 1h1v1h-1zM5 2h1v1h-1zM5 3h1v1h-1zM5 4h1v1h-1zM6 5h1v1h-1zM9 1h2v1h-2zM8 2h1v1h-1zM11 2h1v1h-1zM8 3h1v1h-1zM11 3h1v1h-1zM8 4h1v1h-1zM11 4h1v1h-1zM9 5h2v1h-2zM14 1h2v1h-2zM13 2h1v1h-1zM14 3h1v1h-1zM15 4h1v1h-1zM13 5h2v1h-2zM18 1h2v1h-2zM17 2h1v1h-1zM20 2h1v1h-1zM17 3h4v1h-4zM17 4h1v1h-1zM18 5h2v1h-2zM0 7h5v1h-5z"/></svg>
<svg style="position:absolute;left:246px;top:193px" width="58" height="16" viewBox="0 0 29 8" shape-rendering="crispEdges"><title>Ctrl+W</title><path fill="#000" d="M1 0h3v1h-3zM0 1h1v1h-1zM0 2h1v1h-1zM0 3h1v1h-1zM0 4h1v1h-1zM1 5h3v1h-3zM5 0h1v1h-1zM5 1h2v1h-2zM5 2h1v1h-1zM5 3h1v1h-1zM5 4h1v1h-1zM6 5h1v1h-1zM8 1h1v1h-1zM10 1h1v1h-1zM8 2h2v1h-2zM8 3h1v1h-1zM8 4h1v1h-1zM8 5h1v1h-1zM12 0h1v1h-1zM12 1h1v1h-1zM12 2h1v1h-1zM12 3h1v1h-1zM12 4h1v1h-1zM13 5h1v1h-1zM17 1h1v1h-1zM17 2h1v1h-1zM15 3h5v1h-5zM17 4h1v1h-1zM17 5h1v1h-1zM21 0h1v1h-1zM27 0h1v1h-1zM21 1h1v1h-1zM27 1h1v1h-1zM21 2h1v1h-1zM24 2h1v1h-1zM27 2h1v1h-1zM21 3h1v1h-1zM24 3h1v1h-1zM27 3h1v1h-1zM22 4h1v1h-1zM24 4h1v1h-1zM26 4h1v1h-1zM23 5h1v1h-1zM25 5h1v1h-1z"/></svg>
<svg style="position:absolute;left:24px;top:215px" width="74" height="16" viewBox="0 0 37 8" shape-rendering="crispEdges"><title>Close All</title><path fill="#000" d="M1 0h3v1h-3zM0 1h1v1h-1zM0 2h1v1h-1zM0 3h1v1h-1zM0 4h1v1h-1zM1 5h3v1h-3zM5 0h1v1h-1zM5 1h1v1h-1zM5 2h1v1h-1zM5 3h1v1h-1zM5 4h1v1h-1zM6 5h1v1h-1zM9 1h2v1h-2zM8 2h1v1h-1zM11 2h1v1h-1zM8 3h1v1h-1zM11 3h1v1h-1zM8 4h1v1h-1zM11 4h1v1h-1zM9 5h2v1h-2zM14 1h2v1h-2zM13 2h1v1h-1zM14 3h1v1h-1zM15 4h1v1h-1zM13 5h2v1h-2zM18 1h2v1h-2zM17 2h1v1h-1zM20 2h1v1h-1zM17 3h4v1h-4zM17 4h1v1h-1zM18 5h2v1h-2zM27 0h2v1h-2zM26 1h1v1h-1zM29 1h1v1h-1zM26 2h1v1h-1zM29 2h1v1h-1zM26 3h4v1h-4zM26 4h1v1h-1zM29 4h1v1h-1zM26 5h1v1h-1zM29 5h1v1h-1zM31 0h1v1h-1zM31 1h1v1h-1zM31 2h1v1h-1zM31 3h1v1h-1zM31 4h1v1h-1zM32 5h1v1h-1zM34 0h1v1h-1zM34 1h1v1h-1zM34 2h1v1h-1zM34 3h1v1h-1zM34 4h1v1h-1zM35 5h1v1h-1z"/></svg>
<svg style="position:absolute;left:198px;top:215px" width="106" height="16" viewBox="0 0 53 8" shape-rendering="crispEdges"><title>Ctrl+Shift+W</title><path fill="#000" d="M1 0h3v1h-3zM0 1h1v1h-1zM0 2h1v1h-1zM0 3h1v1h-1zM0 4h1v1h-1zM1 5h3v1h-3zM5 0h1v1h-1zM5 1h2v1h-2zM5 2h1v1h-1zM5 3h1v1h-1zM5 4h1v1h-1zM6 5h1v1h-1zM8 1h1v1h-1zM10 1h1v1h-1zM8 2h2v1h-2zM8 3h1v1h-1zM8 4h1v1h-1zM8 5h1v1h-1zM12 0h1v1h-1zM12 1h1v1h-1zM12 2h1v1h-1zM12 3h1v1h-1zM12 4h1v1h-1zM13 5h1v1h-1zM17 1h1v1h-1zM17 2h1v1h-1zM15 3h5v1h-5zM17 4h1v1h-1zM17 5h1v1h-1zM22 0h3v1h-3zM21 1h1v1h-1zM22 2h2v1h-2zM24 3h1v1h-1zM24 4h1v1h-1zM21 5h3v1h-3zM26 0h1v1h-1zM26 1h1v1h-1zM26 2h3v1h-3zM26 3h1v1h-1zM29 3h1v1h-1zM26 4h1v1h-1zM29 4h1v1h-1zM26 5h1v1h-1zM29 5h1v1h-1zM31 0h1v1h-1zM31 2h1v1h-1zM31 3h1v1h-1zM31 4h1v1h-1zM31 5h1v1h-1zM34 0h1v1h-1zM33 1h1v1h-1zM33 2h2v1h-2zM33 3h1v1h-1zM33 4h1v1h-1zM33 5h1v1h-1zM36 0h1v1h-1zM36 1h2v1h-2zM36 2h1v1h-1zM36 3h1v1h-1zM36 4h1v1h-1zM37 5h1v1h-1zM41 1h1v1h-1zM41 2h1v1h-1zM39 3h5v1h-5zM41 4h1v1h-1zM41 5h1v1h-1zM45 0h1v1h-1zM51 0h1v1h-1zM45 1h1v1h-1zM51 1h1v1h-1zM45 2h1v1h-1zM48 2h1v1h-1zM51 2h1v1h-1zM45 3h1v1h-1zM48 3h1v1h-1zM51 3h1v1h-1zM46 4h1v1h-1zM48 4h1v1h-1zM50 4h1v1h-1zM47 5h1v1h-1zM49 5h1v1h-1z"/></svg>
<div style="left:6px;top:237px;width:308px;height:2px;background:repeating-linear-gradient(90deg,#8e7b70 0 4px,transparent 4px 6px)"></div>
<svg style="position:absolute;left:24px;top:245px" width="168" height="16" viewBox="0 0 84 8" shape-rendering="crispEdges"><title>Import Sprite Sheet</title><path fill="#000" d="M0 0h3v1h-3zM1 1h1v1h-1zM1 2h1v1h-1zM1 3h1v1h-1zM1 4h1v1h-1zM0 5h3v1h-3zM4 1h6v1h-6zM4 2h1v1h-1zM7 2h1v1h-1zM10 2h1v1h-1zM4 3h1v1h-1zM7 3h1v1h-1zM10 3h1v1h-1zM4 4h1v1h-1zM7 4h1v1h-1zM10 4h1v1h-1zM4 5h1v1h-1zM7 5h1v1h-1zM10 5h1v1h-1zM12 1h3v1h-3zM12 2h1v1h-1zM15 2h1v1h-1zM12 3h1v1h-1zM15 3h1v1h-1zM12 4h3v1h-3zM12 5h1v1h-1zM12 6h1v1h-1zM18 1h2v1h-2zM17 2h1v1h-1zM20 2h1v1h-1zM17 3h1v1h-1zM20 3h1v1h-1zM17 4h1v1h-1zM20 4h1v1h-1zM18 5h2v1h-2zM22 1h1v1h-1zM24 1h1v1h-1zM22 2h2v1h-2zM22 3h1v1h-1zM22 4h1v1h-1zM22 5h1v1h-1zM26 0h1v1h-1zM26 1h2v1h-2zM26 2h1v1h-1zM26 3h1v1h-1zM26 4h1v1h-1zM27 5h1v1h-1zM34 0h3v1h-3zM33 1h1v1h-1zM34 2h2v1h-2zM36 3h1v1h-1zM36 4h1v1h-1zM33 5h3v1h-3zM38 1h3v1h-3zM38 2h1v1h-1zM41 2h1v1h-1zM38 3h1v1h-1zM41 3h1v1h-1zM38 4h3v1h-3zM38 5h1v1h-1zM38 6h1v1h-1zM43 1h1v1h-1zM45 1h1v1h-1zM43 2h2v1h-2zM43 3h1v1h-1zM43 4h1v1h-1zM43 5h1v1h-1zM47 0h1v1h-1zM47 2h1v1h-1zM47 3h1v1h-1zM47 4h1v1h-1zM47 5h1v1h-1zM49 0h1v1h-1zM49 1h2v1h-2zM49 2h1v1h-1zM49 3h1v1h-1zM49 4h1v1h-1zM50 5h1v1h-1zM53 1h2v1h-2zM52 2h1v1h-1zM55 2h1v1h-1zM52 3h4v1h-4zM52 4h1v1h-1zM53 5h2v1h-2zM62 0h3v1h-3zM61 1h1v1h-1zM62 2h2v1h-2zM64 3h1v1h-1zM64 4h1v1h-1zM61 5h3v1h-3zM66 0h1v1h-1zM66 1h1v1h-1zM66 2h3v1h-3zM66 3h1v1h-1zM69 3h1v1h-1zM66 4h1v1h-1zM69 4h1v1h-1zM66 5h1v1h-1zM69 5h1v1h-1zM72 1h2v1h-2zM71 2h1v1h-1zM74 2h1v1h-1zM71 3h4v1h-4zM71 4h1v1h-1zM72 5h2v1h-2zM77 1h2v1h-2zM76 2h1v1h-1zM79 2h1v1h-1zM76 3h4v1h-4zM76 4h1v1h-1zM77 5h2v1h-2zM81 0h1v1h-1zM81 1h2v1h-2zM81 2h1v1h-1zM81 3h1v1h-1zM81 4h1v1h-1zM82 5h1v1h-1zM0 7h4v1h-4z"/></svg>
<svg style="position:absolute;left:220px;top:245px" width="84" height="16" viewBox="0 0 42 8" shape-rendering="crispEdges"><title>Ctrl+Alt+I</title><path fill="#000" d="M1 0h3v1h-3zM0 1h1v1h-1zM0 2h1v1h-1zM0 3h1v1h-1zM0 4h1v1h-1zM1 5h3v1h-3zM5 0h1v1h-1zM5 1h2v1h-2zM5 2h1v1h-1zM5 3h1v1h-1zM5 4h1v1h-1zM6 5h1v1h-1zM8 1h1v1h-1zM10 1h1v1h-1zM8 2h2v1h-2zM8 3h1v1h-1zM8 4h1v1h-1zM8 5h1v1h-1zM12 0h1v1h-1zM12 1h1v1h-1zM12 2h1v1h-1zM12 3h1v1h-1zM12 4h1v1h-1zM13 5h1v1h-1zM17 1h1v1h-1zM17 2h1v1h-1zM15 3h5v1h-5zM17 4h1v1h-1zM17 5h1v1h-1zM22 0h2v1h-2zM21 1h1v1h-1zM24 1h1v1h-1zM21 2h1v1h-1zM24 2h1v1h-1zM21 3h4v1h-4zM21 4h1v1h-1zM24 4h1v1h-1zM21 5h1v1h-1zM24 5h1v1h-1zM26 0h1v1h-1zM26 1h1v1h-1zM26 2h1v1h-1zM26 3h1v1h-1zM26 4h1v1h-1zM27 5h1v1h-1zM29 0h1v1h-1zM29 1h2v1h-2zM29 2h1v1h-1zM29 3h1v1h-1zM29 4h1v1h-1zM30 5h1v1h-1zM34 1h1v1h-1zM34 2h1v1h-1zM32 3h5v1h-5zM34 4h1v1h-1zM34 5h1v1h-1zM38 0h3v1h-3zM39 1h1v1h-1zM39 2h1v1h-1zM39 3h1v1h-1zM39 4h1v1h-1zM38 5h3v1h-3z"/></svg>
<svg style="position:absolute;left:24px;top:267px" width="166" height="16" viewBox="0 0 83 8" shape-rendering="crispEdges"><title>Export Sprite Sheet</title><path fill="#000" d="M0 0h4v1h-4zM0 1h1v1h-1zM0 2h3v1h-3zM0 3h1v1h-1zM0 4h1v1h-1zM0 5h4v1h-4zM5 1h1v1h-1zM9 1h1v1h-1zM6 2h1v1h-1zM8 2h1v1h-1zM7 3h1v1h-1zM6 4h1v1h-1zM8 4h1v1h-1zM5 5h1v1h-1zM9 5h1v1h-1zM11 1h3v1h-3zM11 2h1v1h-1zM14 2h1v1h-1zM11 3h1v1h-1zM14 3h1v1h-1zM11 4h3v1h-3zM11 5h1v1h-1zM11 6h1v1h-1zM17 1h2v1h-2zM16 2h1v1h-1zM19 2h1v1h-1zM16 3h1v1h-1zM19 3h1v1h-1zM16 4h1v1h-1zM19 4h1v1h-1zM17 5h2v1h-2zM21 1h1v1h-1zM23 1h1v1h-1zM21 2h2v1h-2zM21 3h1v1h-1zM21 4h1v1h-1zM21 5h1v1h-1zM25 0h1v1h-1zM25 1h2v1h-2zM25 2h1v1h-1zM25 3h1v1h-1zM25 4h1v1h-1zM26 5h1v1h-1zM33 0h3v1h-3zM32 1h1v1h-1zM33 2h2v1h-2zM35 3h1v1h-1zM35 4h1v1h-1zM32 5h3v1h-3zM37 1h3v1h-3zM37 2h1v1h-1zM40 2h1v1h-1zM37 3h1v1h-1zM40 3h1v1h-1zM37 4h3v1h-3zM37 5h1v1h-1zM37 6h1v1h-1zM42 1h1v1h-1zM44 1h1v1h-1zM42 2h2v1h-2zM42 3h1v1h-1zM42 4h1v1h-1zM42 5h1v1h-1zM46 0h1v1h-1zM46 2h1v1h-1zM46 3h1v1h-1zM46 4h1v1h-1zM46 5h1v1h-1zM48 0h1v1h-1zM48 1h2v1h-2zM48 2h1v1h-1zM48 3h1v1h-1zM48 4h1v1h-1zM49 5h1v1h-1zM52 1h2v1h-2zM51 2h1v1h-1zM54 2h1v1h-1zM51 3h4v1h-4zM51 4h1v1h-1zM52 5h2v1h-2zM61 0h3v1h-3zM60 1h1v1h-1zM61 2h2v1h-2zM63 3h1v1h-1zM63 4h1v1h-1zM60 5h3v1h-3zM65 0h1v1h-1zM65 1h1v1h-1zM65 2h3v1h-3zM65 3h1v1h-1zM68 3h1v1h-1zM65 4h1v1h-1zM68 4h1v1h-1zM65 5h1v1h-1zM68 5h1v1h-1zM71 1h2v1h-2zM70 2h1v1h-1zM73 2h1v1h-1zM70 3h4v1h-4zM70 4h1v1h-1zM71 5h2v1h-2zM76 1h2v1h-2zM75 2h1v1h-1zM78 2h1v1h-1zM75 3h4v1h-4zM75 4h1v1h-1zM76 5h2v1h-2zM80 0h1v1h-1zM80 1h2v1h-2zM80 2h1v1h-1zM80 3h1v1h-1zM80 4h1v1h-1zM81 5h1v1h-1zM0 7h5v1h-5z"/></svg>
<svg style="position:absolute;left:218px;top:267px" width="86" height="16" viewBox="0 0 43 8" shape-rendering="crispEdges"><title>Ctrl+Alt+E</title><path fill="#000" d="M1 0h3v1h-3zM0 1h1v1h-1zM0 2h1v1h-1zM0 3h1v1h-1zM0 4h1v1h-1zM1 5h3v1h-3zM5 0h1v1h-1zM5 1h2v1h-2zM5 2h1v1h-1zM5 3h1v1h-1zM5 4h1v1h-1zM6 5h1v1h-1zM8 1h1v1h-1zM10 1h1v1h-1zM8 2h2v1h-2zM8 3h1v1h-1zM8 4h1v1h-1zM8 5h1v1h-1zM12 0h1v1h-1zM12 1h1v1h-1zM12 2h1v1h-1zM12 3h1v1h-1zM12 4h1v1h-1zM13 5h1v1h-1zM17 1h1v1h-1zM17 2h1v1h-1zM15 3h5v1h-5zM17 4h1v1h-1zM17 5h1v1h-1zM22 0h2v1h-2zM21 1h1v1h-1zM24 1h1v1h-1zM21 2h1v1h-1zM24 2h1v1h-1zM21 3h4v1h-4zM21 4h1v1h-1zM24 4h1v1h-1zM21 5h1v1h-1zM24 5h1v1h-1zM26 0h1v1h-1zM26 1h1v1h-1zM26 2h1v1h-1zM26 3h1v1h-1zM26 4h1v1h-1zM27 5h1v1h-1zM29 0h1v1h-1zM29 1h2v1h-2zM29 2h1v1h-1zM29 3h1v1h-1zM29 4h1v1h-1zM30 5h1v1h-1zM34 1h1v1h-1zM34 2h1v1h-1zM32 3h5v1h-5zM34 4h1v1h-1zM34 5h1v1h-1zM38 0h4v1h-4zM38 1h1v1h-1zM38 2h3v1h-3zM38 3h1v1h-1zM38 4h1v1h-1zM38 5h4v1h-4z"/></svg>
<svg style="position:absolute;left:24px;top:289px" width="162" height="16" viewBox="0 0 81 8" shape-rendering="crispEdges"><title>Repeat Last Export</title><path fill="#000" d="M0 0h3v1h-3zM0 1h1v1h-1zM3 1h1v1h-1zM0 2h1v1h-1zM3 2h1v1h-1zM0 3h3v1h-3zM0 4h1v1h-1zM3 4h1v1h-1zM0 5h1v1h-1zM3 5h1v1h-1zM6 1h2v1h-2zM5 2h1v1h-1zM8 2h1v1h-1zM5 3h4v1h-4zM5 4h1v1h-1zM6 5h2v1h-2zM10 1h3v1h-3zM10 2h1v1h-1zM13 2h1v1h-1zM10 3h1v1h-1zM13 3h1v1h-1zM10 4h3v1h-3zM10 5h1v1h-1zM10 6h1v1h-1zM16 1h2v1h-2zM15 2h1v1h-1zM18 2h1v1h-1zM15 3h4v1h-4zM15 4h1v1h-1zM16 5h2v1h-2zM21 1h2v1h-2zM23 2h1v1h-1zM21 3h3v1h-3zM20 4h1v1h-1zM23 4h1v1h-1zM21 5h3v1h-3zM25 0h1v1h-1zM25 1h2v1h-2zM25 2h1v1h-1zM25 3h1v1h-1zM25 4h1v1h-1zM26 5h1v1h-1zM32 0h1v1h-1zM32 1h1v1h-1zM32 2h1v1h-1zM32 3h1v1h-1zM32 4h1v1h-1zM32 5h4v1h-4zM38 1h2v1h-2zM40 2h1v1h-1zM38 3h3v1h-3zM37 4h1v1h-1zM40 4h1v1h-1zM38 5h3v1h-3zM43 1h2v1h-2zM42 2h1v1h-1zM43 3h1v1h-1zM44 4h1v1h-1zM42 5h2v1h-2zM46 0h1v1h-1zM46 1h2v1h-2zM46 2h1v1h-1zM46 3h1v1h-1zM46 4h1v1h-1zM47 5h1v1h-1zM53 0h4v1h-4zM53 1h1v1h-1zM53 2h3v1h-3zM53 3h1v1h-1zM53 4h1v1h-1zM53 5h4v1h-4zM58 1h1v1h-1zM62 1h1v1h-1zM59 2h1v1h-1zM61 2h1v1h-1zM60 3h1v1h-1zM59 4h1v1h-1zM61 4h1v1h-1zM58 5h1v1h-1zM62 5h1v1h-1zM64 1h3v1h-3zM64 2h1v1h-1zM67 2h1v1h-1zM64 3h1v1h-1zM67 3h1v1h-1zM64 4h3v1h-3zM64 5h1v1h-1zM64 6h1v1h-1zM70 1h2v1h-2zM69 2h1v1h-1zM72 2h1v1h-1zM69 3h1v1h-1zM72 3h1v1h-1zM69 4h1v1h-1zM72 4h1v1h-1zM70 5h2v1h-2zM74 1h1v1h-1zM76 1h1v1h-1zM74 2h2v1h-2zM74 3h1v1h-1zM74 4h1v1h-1zM74 5h1v1h-1zM78 0h1v1h-1zM78 1h2v1h-2zM78 2h1v1h-1zM78 3h1v1h-1zM78 4h1v1h-1zM79 5h1v1h-1zM32 7h5v1h-5z"/></svg>
<svg style="position:absolute;left:202px;top:289px" width="102" height="16" viewBox="0 0 51 8" shape-rendering="crispEdges"><title>Ctrl+Shift+X</title><path fill="#000" d="M1 0h3v1h-3zM0 1h1v1h-1zM0 2h1v1h-1zM0 3h1v1h-1zM0 4h1v1h-1zM1 5h3v1h-3zM5 0h1v1h-1zM5 1h2v1h-2zM5 2h1v1h-1zM5 3h1v1h-1zM5 4h1v1h-1zM6 5h1v1h-1zM8 1h1v1h-1zM10 1h1v1h-1zM8 2h2v1h-2zM8 3h1v1h-1zM8 4h1v1h-1zM8 5h1v1h-1zM12 0h1v1h-1zM12 1h1v1h-1zM12 2h1v1h-1zM12 3h1v1h-1zM12 4h1v1h-1zM13 5h1v1h-1zM17 1h1v1h-1zM17 2h1v1h-1zM15 3h5v1h-5zM17 4h1v1h-1zM17 5h1v1h-1zM22 0h3v1h-3zM21 1h1v1h-1zM22 2h2v1h-2zM24 3h1v1h-1zM24 4h1v1h-1zM21 5h3v1h-3zM26 0h1v1h-1zM26 1h1v1h-1zM26 2h3v1h-3zM26 3h1v1h-1zM29 3h1v1h-1zM26 4h1v1h-1zM29 4h1v1h-1zM26 5h1v1h-1zM29 5h1v1h-1zM31 0h1v1h-1zM31 2h1v1h-1zM31 3h1v1h-1zM31 4h1v1h-1zM31 5h1v1h-1zM34 0h1v1h-1zM33 1h1v1h-1zM33 2h2v1h-2zM33 3h1v1h-1zM33 4h1v1h-1zM33 5h1v1h-1zM36 0h1v1h-1zM36 1h2v1h-2zM36 2h1v1h-1zM36 3h1v1h-1zM36 4h1v1h-1zM37 5h1v1h-1zM41 1h1v1h-1zM41 2h1v1h-1zM39 3h5v1h-5zM41 4h1v1h-1zM41 5h1v1h-1zM45 0h1v1h-1zM49 0h1v1h-1zM46 1h1v1h-1zM48 1h1v1h-1zM47 2h1v1h-1zM47 3h1v1h-1zM46 4h1v1h-1zM48 4h1v1h-1zM45 5h1v1h-1zM49 5h1v1h-1z"/></svg>
<div style="left:6px;top:311px;width:308px;height:2px;background:repeating-linear-gradient(90deg,#8e7b70 0 4px,transparent 4px 6px)"></div>
<svg style="position:absolute;left:24px;top:319px" width="32" height="16" viewBox="0 0 16 8" shape-rendering="crispEdges"><title>Exit</title><path fill="#000" d="M0 0h4v1h-4zM0 1h1v1h-1zM0 2h3v1h-3zM0 3h1v1h-1zM0 4h1v1h-1zM0 5h4v1h-4zM5 1h1v1h-1zM9 1h1v1h-1zM6 2h1v1h-1zM8 2h1v1h-1zM7 3h1v1h-1zM6 4h1v1h-1zM8 4h1v1h-1zM5 5h1v1h-1zM9 5h1v1h-1zM11 0h1v1h-1zM11 2h1v1h-1zM11 3h1v1h-1zM11 4h1v1h-1zM11 5h1v1h-1zM13 0h1v1h-1zM13 1h2v1h-2zM13 2h1v1h-1zM13 3h1v1h-1zM13 4h1v1h-1zM14 5h1v1h-1zM5 7h6v1h-6z"/></svg>
<svg style="position:absolute;left:250px;top:319px" width="54" height="16" viewBox="0 0 27 8" shape-rendering="crispEdges"><title>Ctrl+Q</title><path fill="#000" d="M1 0h3v1h-3zM0 1h1v1h-1zM0 2h1v1h-1zM0 3h1v1h-1zM0 4h1v1h-1zM1 5h3v1h-3zM5 0h1v1h-1zM5 1h2v1h-2zM5 2h1v1h-1zM5 3h1v1h-1zM5 4h1v1h-1zM6 5h1v1h-1zM8 1h1v1h-1zM10 1h1v1h-1zM8 2h2v1h-2zM8 3h1v1h-1zM8 4h1v1h-1zM8 5h1v1h-1zM12 0h1v1h-1zM12 1h1v1h-1zM12 2h1v1h-1zM12 3h1v1h-1zM12 4h1v1h-1zM13 5h1v1h-1zM17 1h1v1h-1zM17 2h1v1h-1zM15 3h5v1h-5zM17 4h1v1h-1zM17 5h1v1h-1zM22 0h3v1h-3zM21 1h1v1h-1zM25 1h1v1h-1zM21 2h1v1h-1zM25 2h1v1h-1zM21 3h1v1h-1zM25 3h1v1h-1zM21 4h1v1h-1zM25 4h1v1h-1zM22 5h3v1h-3zM24 6h2v1h-2z"/></svg>
<svg style="position:absolute;left:304px;top:77px" width="6" height="10" preserveAspectRatio="none" viewBox="0 0 3 5" shape-rendering="crispEdges"><path fill="#000" d="M0 0h1v1h-1zM0 1h2v1h-2zM0 2h3v1h-3zM0 3h2v1h-2zM0 4h1v1h-1z"/></svg>
<div style="left:2px;top:141px;width:308px;height:22px;border:4px solid #ff0000;background:transparent"></div>
</body></html>
